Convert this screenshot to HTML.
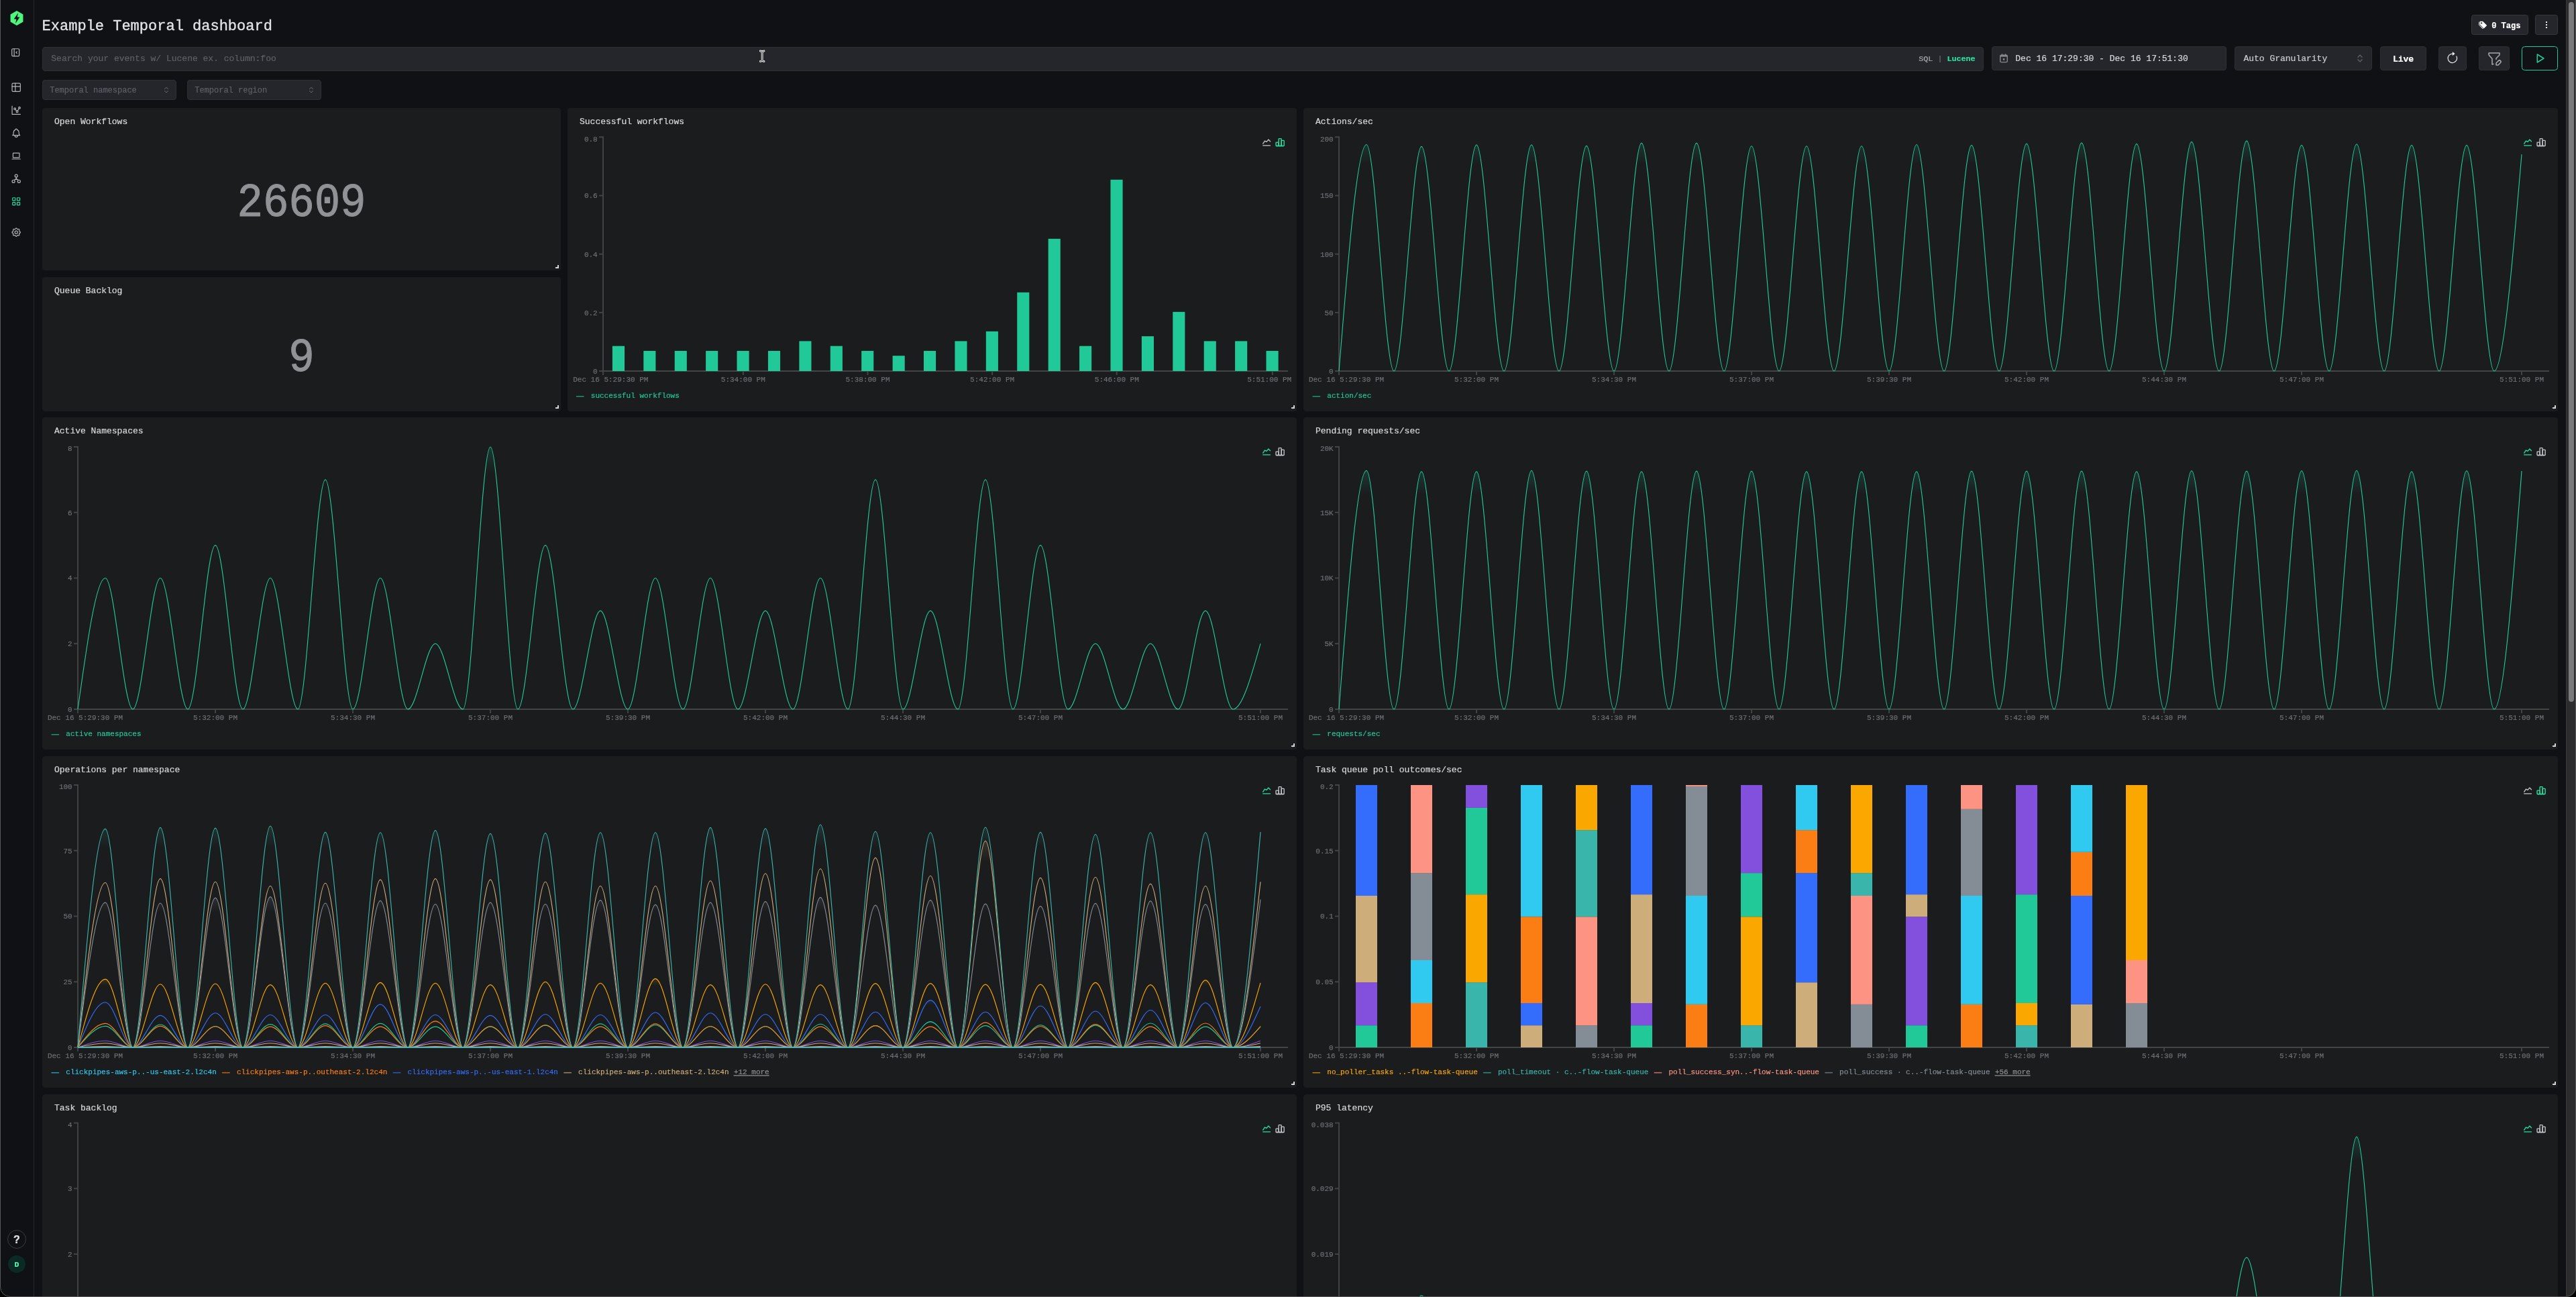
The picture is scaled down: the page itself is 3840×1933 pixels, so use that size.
<!DOCTYPE html><html lang="en"><head><meta charset="utf-8"><title>Example Temporal dashboard</title><style>

html,body{margin:0;padding:0;background:#000;}
body{width:3840px;height:1933px;overflow:hidden;font-family:"Liberation Mono", "DejaVu Sans Mono", monospace;}
#win{will-change:transform;position:absolute;left:0;top:0;width:3840px;height:1933px;background:#101114;overflow:hidden;border-radius:0 0 15px 15px;}
#frame{position:absolute;left:0;top:-2px;width:3840px;height:1935px;box-sizing:border-box;border:1px solid #58585a;border-radius:0 0 15px 15px;pointer-events:none;z-index:50;}
.t{position:absolute;white-space:pre;line-height:1;-webkit-text-stroke:0.22px currentColor;}
.ic{position:absolute;overflow:visible;}
.box{position:absolute;box-sizing:border-box;background:#25262b;border:1px solid #2e2f34;border-radius:4px;}
.panel{position:absolute;background:#1b1c1e;border-radius:4px;overflow:hidden;}
.panel svg.ch{position:absolute;left:0;top:0;}
.ch text{font-family:"Liberation Mono", "DejaVu Sans Mono", monospace;font-size:11px;fill:#6f7075;stroke:#6f7075;stroke-width:0.18px;}
.rz{position:absolute;width:5px;height:5px;margin-left:-1.2px;border-right:2px solid #d4d5d8;border-bottom:2px solid #d4d5d8;box-sizing:border-box;}

</style></head><body><div id="win">
<div id="sidebar" style="position:absolute;left:0;top:0;width:50px;height:1933px;border-right:1px solid #28292d;"></div>
<svg class="ic" style="left:13px;top:14px" width="24" height="26" viewBox="0 0 24 26"><path d="M12 2L21.45 7.5V18.5L12 24L2.55 18.5V7.5Z" fill="#4ff57c"/><path d="M14 5.3L7.7 14.5H11.4L10.1 20.9L16.400 11.500H12.700Z" fill="#101114"/></svg>
<svg class="ic" style="left:14.90px;top:69.80px" width="16.4" height="16.4" viewBox="0 0 24 24" fill="none" stroke="#b4b5b9" stroke-width="1.75" stroke-linecap="round" stroke-linejoin="round"><path d="M4 6a2 2 0 0 1 2 -2h12a2 2 0 0 1 2 2v12a2 2 0 0 1 -2 2h-12a2 2 0 0 1 -2 -2z"/><path d="M9 4v16"/><path d="M15 10l-2 2l2 2"/></svg>
<svg class="ic" style="left:15.80px;top:121.80px" width="16.4" height="16.4" viewBox="0 0 24 24" fill="none" stroke="#b4b5b9" stroke-width="1.75" stroke-linecap="round" stroke-linejoin="round"><path d="M3 5a2 2 0 0 1 2 -2h14a2 2 0 0 1 2 2v14a2 2 0 0 1 -2 2h-14a2 2 0 0 1 -2 -2v-14z"/><path d="M3 10h18"/><path d="M10 3v18"/></svg>
<svg class="ic" style="left:15.80px;top:156.10px" width="16.4" height="16.4" viewBox="0 0 24 24" fill="none" stroke="#b4b5b9" stroke-width="1.75" stroke-linecap="round" stroke-linejoin="round"><path d="M3 3v18h18"/><path d="M7 9a2 2 0 1 0 4 0a2 2 0 1 0 -4 0"/><path d="M17 7a2 2 0 1 0 4 0a2 2 0 1 0 -4 0"/><path d="M12 15a2 2 0 1 0 4 0a2 2 0 1 0 -4 0"/><path d="M10.16 10.62l2.34 2.88"/><path d="M15.088 13.328l2.837 -4.586"/></svg>
<svg class="ic" style="left:15.80px;top:189.80px" width="16.4" height="16.4" viewBox="0 0 24 24" fill="none" stroke="#b4b5b9" stroke-width="1.75" stroke-linecap="round" stroke-linejoin="round"><path d="M10 5a2 2 0 1 1 4 0a7 7 0 0 1 4 6v3a4 4 0 0 0 2 3h-16a4 4 0 0 0 2 -3v-3a7 7 0 0 1 4 -6"/><path d="M9 17v1a3 3 0 0 0 6 0v-1"/></svg>
<svg class="ic" style="left:15.80px;top:224.10px" width="16.4" height="16.4" viewBox="0 0 24 24" fill="none" stroke="#b4b5b9" stroke-width="1.75" stroke-linecap="round" stroke-linejoin="round"><path d="M3 19l18 0"/><path d="M5 7a1 1 0 0 1 1 -1h12a1 1 0 0 1 1 1v8a1 1 0 0 1 -1 1h-12a1 1 0 0 1 -1 -1z"/></svg>
<svg class="ic" style="left:15.80px;top:258.10px" width="16.4" height="16.4" viewBox="0 0 24 24" fill="none" stroke="#b4b5b9" stroke-width="1.75" stroke-linecap="round" stroke-linejoin="round"><path d="M9 6a3 3 0 1 0 6 0a3 3 0 1 0 -6 0"/><path d="M3 18a3 3 0 1 0 6 0a3 3 0 1 0 -6 0"/><path d="M15 18a3 3 0 1 0 6 0a3 3 0 1 0 -6 0"/><path d="M7.6 15.500l4.400 -3.500l4.400 3.500"/><path d="M12 9l0 3"/></svg>
<svg class="ic" style="left:15.80px;top:291.80px" width="16.4" height="16.4" viewBox="0 0 24 24" fill="none" stroke="#25dd9f" stroke-width="1.75" stroke-linecap="round" stroke-linejoin="round"><path d="M4 5a1 1 0 0 1 1 -1h4a1 1 0 0 1 1 1v4a1 1 0 0 1 -1 1h-4a1 1 0 0 1 -1 -1z"/><path d="M14 5a1 1 0 0 1 1 -1h4a1 1 0 0 1 1 1v4a1 1 0 0 1 -1 1h-4a1 1 0 0 1 -1 -1z"/><path d="M4 15a1 1 0 0 1 1 -1h4a1 1 0 0 1 1 1v4a1 1 0 0 1 -1 1h-4a1 1 0 0 1 -1 -1z"/><path d="M14 15a1 1 0 0 1 1 -1h4a1 1 0 0 1 1 1v4a1 1 0 0 1 -1 1h-4a1 1 0 0 1 -1 -1z"/></svg>
<svg class="ic" style="left:15.80px;top:338.30px" width="16.4" height="16.4" viewBox="0 0 24 24" fill="none" stroke="#b4b5b9" stroke-width="1.75" stroke-linecap="round" stroke-linejoin="round"><path d="M10.325 4.317c.426 -1.756 2.924 -1.756 3.35 0a1.724 1.724 0 0 0 2.573 1.066c1.543 -.94 3.31 .826 2.37 2.37a1.724 1.724 0 0 0 1.065 2.572c1.756 .426 1.756 2.924 0 3.35a1.724 1.724 0 0 0 -1.066 2.573c.94 1.543 -.826 3.31 -2.37 2.37a1.724 1.724 0 0 0 -2.572 1.065c-.426 1.756 -2.924 1.756 -3.35 0a1.724 1.724 0 0 0 -2.573 -1.066c-1.543 .94 -3.31 -.826 -2.37 -2.37a1.724 1.724 0 0 0 -1.065 -2.572c-1.756 -.426 -1.756 -2.924 0 -3.35a1.724 1.724 0 0 0 1.066 -2.573c-.94 -1.543 .826 -3.31 2.37 -2.37c1 .608 2.296 .07 2.572 -1.065z"/><path d="M9 12a3 3 0 1 0 6 0a3 3 0 0 0 -6 0"/></svg>
<div style="position:absolute;left:11px;top:1833px;width:28px;height:28px;box-sizing:border-box;border:1px solid #3a3b40;border-radius:50%"></div>
<div class="t " style="left:25.00px;top:1840.23px;font-size:16px;color:#e6e6e8;font-weight:700;transform:translateX(-50%);font-family:&quot;Liberation Sans&quot;,sans-serif;">?</div>
<div style="position:absolute;left:12px;top:1871px;width:26px;height:26px;border-radius:50%;background:#0b2a25"></div>
<div class="t " style="left:25.00px;top:1879.48px;font-size:11.5px;color:#59f5b0;font-weight:700;transform:translateX(-50%);">D</div>
<div class="t " style="left:62.60px;top:28.93px;font-size:22px;color:#e2e3e6;-webkit-text-stroke:0.35px #e2e3e6;">Example Temporal dashboard</div>
<div class="box" style="left:3684px;top:22px;width:85px;height:30px;border-color:#36373c;border-radius:3.5px"></div>
<svg class="ic" style="left:3694.6px;top:31.2px" width="12.2" height="12.2" viewBox="0 0 16 16" fill="#fff"><path d="M2 2a1 1 0 0 1 1-1h4.586a1 1 0 0 1 .707.293l7 7a1 1 0 0 1 0 1.414l-4.586 4.586a1 1 0 0 1-1.414 0l-7-7A1 1 0 0 1 2 6.586zm3.500 4a1.500 1.500 0 1 0 0-3 1.500 1.500 0 0 0 0 3"/><path d="M1.293 7.793A1 1 0 0 1 1 7.086V2a1 1 0 0 0-1 1v4.586a1 1 0 0 0 .293.707l7 7a1 1 0 0 0 1.414 0l.043-.043z"/></svg>
<div class="t " style="left:3714.20px;top:32.60px;font-size:12px;color:#ffffff;font-weight:700;">0 Tags</div>
<div class="box" style="left:3779px;top:22px;width:34px;height:30px;border-color:#36373c;border-radius:3.5px"></div>
<div style="position:absolute;left:3794.9px;top:32.1px;width:2.2px;height:2.2px;background:#fff;border-radius:0.6px"></div>
<div style="position:absolute;left:3794.9px;top:36.0px;width:2.2px;height:2.2px;background:#fff;border-radius:0.6px"></div>
<div style="position:absolute;left:3794.9px;top:39.9px;width:2.2px;height:2.2px;background:#fff;border-radius:0.6px"></div>
<div class="box" style="left:63px;top:70px;width:2894px;height:36px;"></div>
<div class="t " style="left:76.30px;top:81.03px;font-size:13px;color:#5c5f66;">Search your events w/ Lucene ex. column:foo</div>
<div class="t " style="left:2860.30px;top:82.63px;font-size:11.7px;color:#a6a7ab;">SQL</div>
<div class="t " style="left:2888.40px;top:82.63px;font-size:11.7px;color:#6a6b70;">|</div>
<div class="t " style="left:2902.40px;top:82.63px;font-size:11.7px;color:#25e2a1;font-weight:700;">Lucene</div>
<svg class="ic" style="left:1131.9px;top:74.8px" width="8.3" height="17.5" viewBox="0 0 10 21"><path d="M1.6 1.2C3.2 1.2 4.3 1.9 5 3.2C5.700 1.9 6.800 1.2 8.400 1.2M5 3.200V17.800M1.600 19.800C3.200 19.800 4.300 19.100 5 17.800C5.700 19.100 6.800 19.800 8.400 19.800" fill="none" stroke="#f4f4f4" stroke-width="3.400" stroke-linecap="round" stroke-linejoin="round"/><path d="M1.6 1.2C3.2 1.2 4.3 1.9 5 3.2C5.700 1.9 6.800 1.2 8.400 1.2M5 3.200V17.800M1.600 19.800C3.200 19.800 4.300 19.100 5 17.800C5.700 19.100 6.800 19.800 8.400 19.800" fill="none" stroke="#3a3a3a" stroke-width="1.200" stroke-linecap="round" stroke-linejoin="round"/></svg>
<div class="box" style="left:2969px;top:69px;width:350px;height:36px;"></div>
<svg class="ic" style="left:2980.8px;top:80.2px" width="12" height="13.4" viewBox="0 0 13 14.5"><rect x="0.8" y="2.3" width="11.4" height="11.4" rx="1.800" fill="none" stroke="#8a8b90" stroke-width="1.500"/><rect x="0.8" y="2.3" width="11.4" height="2.6" fill="#8a8b90"/><rect x="3" y="0.3" width="1.500" height="3" fill="#8a8b90"/><rect x="8.500" y="0.300" width="1.500" height="3" fill="#8a8b90"/><rect x="5.2" y="7.6" width="2.6" height="3" fill="#8a8b90"/></svg>
<div class="t " style="left:3004.30px;top:81.43px;font-size:13px;color:#d3d4d7;">Dec 16 17:29:30 - Dec 16 17:51:30</div>
<div class="box" style="left:3331px;top:69px;width:205px;height:36px;"></div>
<div class="t " style="left:3344.40px;top:81.43px;font-size:13px;color:#c9cacd;">Auto Granularity</div>
<svg class="ic" style="left:3511.8px;top:79.2px" width="12" height="16" viewBox="-6 -8 12 16" fill="none" stroke="#5c5f66" stroke-width="1.3" stroke-linecap="round" stroke-linejoin="round"><path d="M-3.1,-1.7 L0,-5.0 L3.1,-1.7"/><path d="M-3.1,1.7 L0,5.0 L3.1,1.7"/></svg>
<div class="box" style="left:3548px;top:69px;width:69px;height:36px;"></div>
<div class="t " style="left:3566.90px;top:81.53px;font-size:13px;color:#ffffff;font-weight:700;">Live</div>
<div class="box" style="left:3635px;top:69px;width:42px;height:36px;"></div>
<svg class="ic" style="left:3646.2px;top:77.0px" width="19.6" height="19.6" viewBox="0 0 16 16" fill="#ececee"><path fill-rule="evenodd" d="M8 3a5 5 0 1 0 4.546 2.914.5.5 0 0 1 .908-.417A6 6 0 1 1 8 2z"/><path d="M8 4.466V.534a.25.25 0 0 1 .41-.192l2.360 1.966c.120.100.120.284 0 .384L8.410 4.658A.250.250 0 0 1 8 4.466"/></svg>
<div class="box" style="left:3695px;top:69px;width:46px;height:36px;"></div>
<svg class="ic" style="left:3705.80px;top:75.00px" width="24" height="24" viewBox="0 0 24 24" fill="none" stroke="#a9aaae" stroke-width="1.5" stroke-linecap="round" stroke-linejoin="round"><path d="M10.97 20.344l-1.97 .656v-8.5l-4.48 -4.928a2 2 0 0 1 -.52 -1.345v-2.227h16v2.172a2 2 0 0 1 -.586 1.414l-4.414 4.414v1.5"/><path d="M18.42 15.61a2.1 2.1 0 0 1 2.97 2.97l-3.39 3.42h-3v-3l3.42 -3.39z"/></svg>
<div class="box" style="left:3759px;top:69px;width:54px;height:36px;background:transparent;border:1.5px solid #20c997;border-radius:4.5px"></div>
<svg class="ic" style="left:3777.00px;top:78.00px" width="18" height="18" viewBox="0 0 24 24" fill="none" stroke="#20c997" stroke-width="2.0" stroke-linecap="round" stroke-linejoin="round"><path d="M7 4v16l13 -8z"/></svg>
<div class="box" style="left:63px;top:119px;width:200px;height:30px;"></div>
<div class="t " style="left:74.20px;top:129.00px;font-size:12px;color:#5c5f66;">Temporal namespace</div>
<svg class="ic" style="left:242px;top:126.1px" width="12" height="16" viewBox="-6 -8 12 16" fill="none" stroke="#54575d" stroke-width="1.1" stroke-linecap="round" stroke-linejoin="round"><path d="M-2.5,-1.3 L0,-3.8 L2.5,-1.3"/><path d="M-2.5,1.3 L0,3.8 L2.5,1.3"/></svg>
<div class="box" style="left:279px;top:119px;width:200px;height:30px;"></div>
<div class="t " style="left:290.20px;top:129.00px;font-size:12px;color:#5c5f66;">Temporal region</div>
<svg class="ic" style="left:458px;top:126.1px" width="12" height="16" viewBox="-6 -8 12 16" fill="none" stroke="#54575d" stroke-width="1.1" stroke-linecap="round" stroke-linejoin="round"><path d="M-2.5,-1.3 L0,-3.8 L2.5,-1.3"/><path d="M-2.5,1.3 L0,3.8 L2.5,1.3"/></svg>
<div class="panel" style="left:63px;top:161px;width:773px;height:242px">
<div class="t " style="left:18.00px;top:13.63px;font-size:13px;color:#d5d6d9;">Open Workflows</div>
<div class="t " style="left:386.50px;top:111.52px;font-size:64px;color:#909296;transform:translateX(-50%);transform:translateX(-50%) scaleY(1.088);transform-origin:50% 76.69%;-webkit-text-stroke:1.0px #909296;">26609</div>
</div>
<div class="rz" style="left:829px;top:394.9px"></div>
<div class="panel" style="left:63px;top:413px;width:773px;height:200px">
<div class="t " style="left:18.00px;top:13.63px;font-size:13px;color:#d5d6d9;">Queue Backlog</div>
<div class="t " style="left:386.50px;top:90.72px;font-size:64px;color:#909296;transform:translateX(-50%);transform:translateX(-50%) scaleY(1.088);transform-origin:50% 76.69%;-webkit-text-stroke:1.0px #909296;">9</div>
</div>
<div class="rz" style="left:829px;top:604.4px"></div>
<div class="panel" style="left:846px;top:161px;width:1087px;height:452px">
<div class="t " style="left:18.00px;top:13.63px;font-size:13px;color:#d5d6d9;">Successful workflows</div>
<svg class="ic" style="left:1033.60px;top:42.70px" width="16.2" height="16.2" viewBox="0 0 24 24" fill="none" stroke="#c4c5c9" stroke-width="2.0" stroke-linecap="round" stroke-linejoin="round"><path d="M4 19l16 0"/><path d="M4 15l4 -6l4 2l4 -5l4 4"/></svg>
<svg class="ic" style="left:1053.60px;top:42.70px" width="16.2" height="16.2" viewBox="0 0 24 24" fill="none" stroke="#25e2a1" stroke-width="2.0" stroke-linecap="round" stroke-linejoin="round"><path d="M3 13a1 1 0 0 1 1 -1h4a1 1 0 0 1 1 1v6a1 1 0 0 1 -1 1h-4a1 1 0 0 1 -1 -1z"/><path d="M15 9a1 1 0 0 1 1 -1h4a1 1 0 0 1 1 1v10a1 1 0 0 1 -1 1h-4a1 1 0 0 1 -1 -1z"/><path d="M9 5a1 1 0 0 1 1 -1h4a1 1 0 0 1 1 1v14a1 1 0 0 1 -1 1h-4a1 1 0 0 1 -1 -1z"/><path d="M4 20h14"/></svg>
<svg class="ch" width="1087" height="452" viewBox="846 161 1087 452">
<g stroke="#444547" stroke-width="1.9" fill="none"><path d="M899,203.35000000000002V553"/><path d="M893,553H1920"/><path d="M893,465.825H899"/><path d="M893,378.65H899"/><path d="M893,291.475H899"/><path d="M893,204.3H899"/><path d="M899.0,553V559"/><path d="M1107.840909090909,553V559"/><path d="M1293.4772727272727,553V559"/><path d="M1479.1136363636365,553V559"/><path d="M1664.75,553V559"/><path d="M1896.7954545454545,553V559"/></g><text x="890.7" y="556.9" text-anchor="end">0</text><text x="890.7" y="469.7" text-anchor="end">0.2</text><text x="890.7" y="382.5" text-anchor="end">0.4</text><text x="890.7" y="295.4" text-anchor="end">0.6</text><text x="890.7" y="210.7" text-anchor="end">0.8</text><text x="910.3" y="569.3" text-anchor="middle">Dec 16 5:29:30 PM</text><text x="1107.8" y="569.3" text-anchor="middle">5:34:00 PM</text><text x="1293.5" y="569.3" text-anchor="middle">5:38:00 PM</text><text x="1479.1" y="569.3" text-anchor="middle">5:42:00 PM</text><text x="1664.8" y="569.3" text-anchor="middle">5:46:00 PM</text><text x="1892.2" y="569.3" text-anchor="middle">5:51:00 PM</text>
<g fill="#20c997"><rect x="912.90" y="515.68" width="18.1" height="37.32"/><rect x="959.31" y="522.94" width="18.1" height="30.06"/><rect x="1005.72" y="522.94" width="18.1" height="30.06"/><rect x="1052.13" y="522.94" width="18.1" height="30.06"/><rect x="1098.54" y="522.94" width="18.1" height="30.06"/><rect x="1144.95" y="522.94" width="18.1" height="30.06"/><rect x="1191.36" y="508.41" width="18.1" height="44.59"/><rect x="1237.77" y="515.68" width="18.1" height="37.32"/><rect x="1284.18" y="522.94" width="18.1" height="30.06"/><rect x="1330.59" y="530.21" width="18.1" height="22.79"/><rect x="1377.00" y="522.94" width="18.1" height="30.06"/><rect x="1423.40" y="508.41" width="18.1" height="44.59"/><rect x="1469.81" y="493.88" width="18.1" height="59.12"/><rect x="1516.22" y="435.77" width="18.1" height="117.23"/><rect x="1562.63" y="355.86" width="18.1" height="197.14"/><rect x="1609.04" y="515.68" width="18.1" height="37.32"/><rect x="1655.45" y="267.78" width="18.1" height="285.22"/><rect x="1701.86" y="501.15" width="18.1" height="51.85"/><rect x="1748.27" y="464.82" width="18.1" height="88.17"/><rect x="1794.68" y="508.41" width="18.1" height="44.59"/><rect x="1841.09" y="508.41" width="18.1" height="44.59"/><rect x="1887.50" y="522.94" width="18.1" height="30.06"/></g>
<path d="M859.0,590.7h11.6" stroke="#20c997" stroke-opacity="0.7" stroke-width="1.6"/><text x="880.8" y="593.4" style="fill:#20c997;stroke:#20c997">successful workflows</text>
</svg>
</div>
<div class="rz" style="left:1926px;top:604.4px"></div>
<div class="panel" style="left:1943px;top:161px;width:1870px;height:452px">
<div class="t " style="left:18.00px;top:13.63px;font-size:13px;color:#d5d6d9;">Actions/sec</div>
<svg class="ic" style="left:1816.60px;top:42.70px" width="16.2" height="16.2" viewBox="0 0 24 24" fill="none" stroke="#25e2a1" stroke-width="2.0" stroke-linecap="round" stroke-linejoin="round"><path d="M4 19l16 0"/><path d="M4 15l4 -6l4 2l4 -5l4 4"/></svg>
<svg class="ic" style="left:1836.60px;top:42.70px" width="16.2" height="16.2" viewBox="0 0 24 24" fill="none" stroke="#c4c5c9" stroke-width="2.0" stroke-linecap="round" stroke-linejoin="round"><path d="M3 13a1 1 0 0 1 1 -1h4a1 1 0 0 1 1 1v6a1 1 0 0 1 -1 1h-4a1 1 0 0 1 -1 -1z"/><path d="M15 9a1 1 0 0 1 1 -1h4a1 1 0 0 1 1 1v10a1 1 0 0 1 -1 1h-4a1 1 0 0 1 -1 -1z"/><path d="M9 5a1 1 0 0 1 1 -1h4a1 1 0 0 1 1 1v14a1 1 0 0 1 -1 1h-4a1 1 0 0 1 -1 -1z"/><path d="M4 20h14"/></svg>
<svg class="ch" width="1870" height="452" viewBox="1943 161 1870 452">
<g stroke="#444547" stroke-width="1.9" fill="none"><path d="M1996,203.35000000000002V553"/><path d="M1990,553H3800"/><path d="M1990,465.825H1996"/><path d="M1990,378.65H1996"/><path d="M1990,291.475H1996"/><path d="M1990,204.3H1996"/><path d="M1996,553V559"/><path d="M2201.0,553V559"/><path d="M2406,553V559"/><path d="M2611.0,553V559"/><path d="M2816,553V559"/><path d="M3021.0,553V559"/><path d="M3226,553V559"/><path d="M3431.0,553V559"/><path d="M3759.0,553V559"/></g><text x="1987.7" y="556.9" text-anchor="end">0</text><text x="1987.7" y="469.7" text-anchor="end">50</text><text x="1987.7" y="382.5" text-anchor="end">100</text><text x="1987.7" y="295.4" text-anchor="end">150</text><text x="1987.7" y="210.7" text-anchor="end">200</text><text x="2007.0" y="569.3" text-anchor="middle">Dec 16 5:29:30 PM</text><text x="2201.0" y="569.3" text-anchor="middle">5:32:00 PM</text><text x="2406.0" y="569.3" text-anchor="middle">5:34:30 PM</text><text x="2611.0" y="569.3" text-anchor="middle">5:37:00 PM</text><text x="2816.0" y="569.3" text-anchor="middle">5:39:30 PM</text><text x="3021.0" y="569.3" text-anchor="middle">5:42:00 PM</text><text x="3226.0" y="569.3" text-anchor="middle">5:44:30 PM</text><text x="3431.0" y="569.3" text-anchor="middle">5:47:00 PM</text><text x="3759.0" y="569.3" text-anchor="middle">5:51:00 PM</text>
<defs><linearGradient id="g1" x1="0" y1="0" x2="0" y2="1"><stop offset="0" stop-color="#20c997" stop-opacity="0.17"/><stop offset="0.1" stop-color="#20c997" stop-opacity="0"/></linearGradient></defs><path d="M1996.00,553.00C2009.67,384.23 2023.33,215.46 2037.00,215.46C2050.67,215.46 2064.33,553.00 2078.00,553.00C2091.67,553.00 2105.33,218.42 2119.00,218.42C2132.67,218.42 2146.33,553.00 2160.00,553.00C2173.67,553.00 2187.33,215.81 2201.00,215.81C2214.67,215.81 2228.33,553.00 2242.00,553.00C2255.67,553.00 2269.33,215.81 2283.00,215.81C2296.67,215.81 2310.33,553.00 2324.00,553.00C2337.67,553.00 2351.33,217.38 2365.00,217.38C2378.67,217.38 2392.33,553.00 2406.00,553.00C2419.67,553.00 2433.33,213.19 2447.00,213.19C2460.67,213.19 2474.33,553.00 2488.00,553.00C2501.67,553.00 2515.33,213.19 2529.00,213.19C2542.67,213.19 2556.33,553.00 2570.00,553.00C2583.67,553.00 2597.33,217.72 2611.00,217.72C2624.67,217.72 2638.33,553.00 2652.00,553.00C2665.67,553.00 2679.33,217.72 2693.00,217.72C2706.67,217.72 2720.33,553.00 2734.00,553.00C2747.67,553.00 2761.33,217.72 2775.00,217.72C2788.67,217.72 2802.33,553.00 2816.00,553.00C2829.67,553.00 2843.33,215.46 2857.00,215.46C2870.67,215.46 2884.33,553.00 2898.00,553.00C2911.67,553.00 2925.33,216.33 2939.00,216.33C2952.67,216.33 2966.33,553.00 2980.00,553.00C2993.67,553.00 3007.33,214.06 3021.00,214.06C3034.67,214.06 3048.33,553.00 3062.00,553.00C3075.67,553.00 3089.33,212.84 3103.00,212.84C3116.67,212.84 3130.33,553.00 3144.00,553.00C3157.67,553.00 3171.33,214.41 3185.00,214.41C3198.67,214.41 3212.33,553.00 3226.00,553.00C3239.67,553.00 3253.33,211.45 3267.00,211.45C3280.67,211.45 3294.33,553.00 3308.00,553.00C3321.67,553.00 3335.33,209.88 3349.00,209.88C3362.67,209.88 3376.33,553.00 3390.00,553.00C3403.67,553.00 3417.33,216.33 3431.00,216.33C3444.67,216.33 3458.33,553.00 3472.00,553.00C3485.67,553.00 3499.33,214.76 3513.00,214.76C3526.67,214.76 3540.33,553.00 3554.00,553.00C3567.67,553.00 3581.33,216.33 3595.00,216.33C3608.67,216.33 3622.33,553.00 3636.00,553.00C3649.67,553.00 3663.33,216.33 3677.00,216.33C3690.67,216.33 3704.33,553.00 3718.00,553.00C3731.67,553.00 3745.33,391.55 3759.00,230.10L3759.00,553L1996.00,553Z" fill="url(#g1)" stroke="none"/><path d="M1996.00,553.00C2009.67,384.23 2023.33,215.46 2037.00,215.46C2050.67,215.46 2064.33,553.00 2078.00,553.00C2091.67,553.00 2105.33,218.42 2119.00,218.42C2132.67,218.42 2146.33,553.00 2160.00,553.00C2173.67,553.00 2187.33,215.81 2201.00,215.81C2214.67,215.81 2228.33,553.00 2242.00,553.00C2255.67,553.00 2269.33,215.81 2283.00,215.81C2296.67,215.81 2310.33,553.00 2324.00,553.00C2337.67,553.00 2351.33,217.38 2365.00,217.38C2378.67,217.38 2392.33,553.00 2406.00,553.00C2419.67,553.00 2433.33,213.19 2447.00,213.19C2460.67,213.19 2474.33,553.00 2488.00,553.00C2501.67,553.00 2515.33,213.19 2529.00,213.19C2542.67,213.19 2556.33,553.00 2570.00,553.00C2583.67,553.00 2597.33,217.72 2611.00,217.72C2624.67,217.72 2638.33,553.00 2652.00,553.00C2665.67,553.00 2679.33,217.72 2693.00,217.72C2706.67,217.72 2720.33,553.00 2734.00,553.00C2747.67,553.00 2761.33,217.72 2775.00,217.72C2788.67,217.72 2802.33,553.00 2816.00,553.00C2829.67,553.00 2843.33,215.46 2857.00,215.46C2870.67,215.46 2884.33,553.00 2898.00,553.00C2911.67,553.00 2925.33,216.33 2939.00,216.33C2952.67,216.33 2966.33,553.00 2980.00,553.00C2993.67,553.00 3007.33,214.06 3021.00,214.06C3034.67,214.06 3048.33,553.00 3062.00,553.00C3075.67,553.00 3089.33,212.84 3103.00,212.84C3116.67,212.84 3130.33,553.00 3144.00,553.00C3157.67,553.00 3171.33,214.41 3185.00,214.41C3198.67,214.41 3212.33,553.00 3226.00,553.00C3239.67,553.00 3253.33,211.45 3267.00,211.45C3280.67,211.45 3294.33,553.00 3308.00,553.00C3321.67,553.00 3335.33,209.88 3349.00,209.88C3362.67,209.88 3376.33,553.00 3390.00,553.00C3403.67,553.00 3417.33,216.33 3431.00,216.33C3444.67,216.33 3458.33,553.00 3472.00,553.00C3485.67,553.00 3499.33,214.76 3513.00,214.76C3526.67,214.76 3540.33,553.00 3554.00,553.00C3567.67,553.00 3581.33,216.33 3595.00,216.33C3608.67,216.33 3622.33,553.00 3636.00,553.00C3649.67,553.00 3663.33,216.33 3677.00,216.33C3690.67,216.33 3704.33,553.00 3718.00,553.00C3731.67,553.00 3745.33,391.55 3759.00,230.10" fill="none" stroke="#20c997" stroke-width="1.15"/>
<path d="M1956.5,590.7h11.6" stroke="#20c997" stroke-opacity="0.7" stroke-width="1.6"/><text x="1978.3" y="593.4" style="fill:#20c997;stroke:#20c997">action/sec</text>
</svg>
</div>
<div class="rz" style="left:3806px;top:604.4px"></div>
<div class="panel" style="left:63px;top:622px;width:1870px;height:495px">
<div class="t " style="left:18.00px;top:14.13px;font-size:13px;color:#d5d6d9;">Active Namespaces</div>
<svg class="ic" style="left:1816.60px;top:43.20px" width="16.2" height="16.2" viewBox="0 0 24 24" fill="none" stroke="#25e2a1" stroke-width="2.0" stroke-linecap="round" stroke-linejoin="round"><path d="M4 19l16 0"/><path d="M4 15l4 -6l4 2l4 -5l4 4"/></svg>
<svg class="ic" style="left:1836.60px;top:43.20px" width="16.2" height="16.2" viewBox="0 0 24 24" fill="none" stroke="#c4c5c9" stroke-width="2.0" stroke-linecap="round" stroke-linejoin="round"><path d="M3 13a1 1 0 0 1 1 -1h4a1 1 0 0 1 1 1v6a1 1 0 0 1 -1 1h-4a1 1 0 0 1 -1 -1z"/><path d="M15 9a1 1 0 0 1 1 -1h4a1 1 0 0 1 1 1v10a1 1 0 0 1 -1 1h-4a1 1 0 0 1 -1 -1z"/><path d="M9 5a1 1 0 0 1 1 -1h4a1 1 0 0 1 1 1v14a1 1 0 0 1 -1 1h-4a1 1 0 0 1 -1 -1z"/><path d="M4 20h14"/></svg>
<svg class="ch" width="1870" height="495" viewBox="63 622 1870 495">
<g stroke="#444547" stroke-width="1.9" fill="none"><path d="M116,665.05V1057"/><path d="M110,1057H1920"/><path d="M110,959.25H116"/><path d="M110,861.5H116"/><path d="M110,763.75H116"/><path d="M110,666.0H116"/><path d="M116,1057V1063"/><path d="M321.0,1057V1063"/><path d="M526,1057V1063"/><path d="M731.0,1057V1063"/><path d="M936,1057V1063"/><path d="M1141.0,1057V1063"/><path d="M1346,1057V1063"/><path d="M1551.0,1057V1063"/><path d="M1879.0,1057V1063"/></g><text x="107.7" y="1060.9" text-anchor="end">0</text><text x="107.7" y="963.1" text-anchor="end">2</text><text x="107.7" y="865.4" text-anchor="end">4</text><text x="107.7" y="767.6" text-anchor="end">6</text><text x="107.7" y="672.4" text-anchor="end">8</text><text x="127.0" y="1073.3" text-anchor="middle">Dec 16 5:29:30 PM</text><text x="321.0" y="1073.3" text-anchor="middle">5:32:00 PM</text><text x="526.0" y="1073.3" text-anchor="middle">5:34:30 PM</text><text x="731.0" y="1073.3" text-anchor="middle">5:37:00 PM</text><text x="936.0" y="1073.3" text-anchor="middle">5:39:30 PM</text><text x="1141.0" y="1073.3" text-anchor="middle">5:42:00 PM</text><text x="1346.0" y="1073.3" text-anchor="middle">5:44:30 PM</text><text x="1551.0" y="1073.3" text-anchor="middle">5:47:00 PM</text><text x="1879.0" y="1073.3" text-anchor="middle">5:51:00 PM</text>
<defs><linearGradient id="g2" x1="0" y1="0" x2="0" y2="1"><stop offset="0" stop-color="#20c997" stop-opacity="0.17"/><stop offset="0.1" stop-color="#20c997" stop-opacity="0"/></linearGradient></defs><path d="M116.00,1057.00C129.67,959.25 143.33,861.50 157.00,861.50C170.67,861.50 184.33,1057.00 198.00,1057.00C211.67,1057.00 225.33,861.50 239.00,861.50C252.67,861.50 266.33,1057.00 280.00,1057.00C293.67,1057.00 307.33,812.62 321.00,812.62C334.67,812.62 348.33,1057.00 362.00,1057.00C375.67,1057.00 389.33,861.50 403.00,861.50C416.67,861.50 430.33,1057.00 444.00,1057.00C457.67,1057.00 471.33,714.88 485.00,714.88C498.67,714.88 512.33,1057.00 526.00,1057.00C539.67,1057.00 553.33,861.50 567.00,861.50C580.67,861.50 594.33,1057.00 608.00,1057.00C621.67,1057.00 635.33,959.25 649.00,959.25C662.67,959.25 676.33,1057.00 690.00,1057.00C703.67,1057.00 717.33,666.00 731.00,666.00C744.67,666.00 758.33,1057.00 772.00,1057.00C785.67,1057.00 799.33,812.62 813.00,812.62C826.67,812.62 840.33,1057.00 854.00,1057.00C867.67,1057.00 881.33,910.38 895.00,910.38C908.67,910.38 922.33,1057.00 936.00,1057.00C949.67,1057.00 963.33,861.50 977.00,861.50C990.67,861.50 1004.33,1057.00 1018.00,1057.00C1031.67,1057.00 1045.33,861.50 1059.00,861.50C1072.67,861.50 1086.33,1057.00 1100.00,1057.00C1113.67,1057.00 1127.33,910.38 1141.00,910.38C1154.67,910.38 1168.33,1057.00 1182.00,1057.00C1195.67,1057.00 1209.33,861.50 1223.00,861.50C1236.67,861.50 1250.33,1057.00 1264.00,1057.00C1277.67,1057.00 1291.33,714.88 1305.00,714.88C1318.67,714.88 1332.33,1057.00 1346.00,1057.00C1359.67,1057.00 1373.33,910.38 1387.00,910.38C1400.67,910.38 1414.33,1057.00 1428.00,1057.00C1441.67,1057.00 1455.33,714.88 1469.00,714.88C1482.67,714.88 1496.33,1057.00 1510.00,1057.00C1523.67,1057.00 1537.33,812.62 1551.00,812.62C1564.67,812.62 1578.33,1057.00 1592.00,1057.00C1605.67,1057.00 1619.33,959.25 1633.00,959.25C1646.67,959.25 1660.33,1057.00 1674.00,1057.00C1687.67,1057.00 1701.33,959.25 1715.00,959.25C1728.67,959.25 1742.33,1057.00 1756.00,1057.00C1769.67,1057.00 1783.33,910.38 1797.00,910.38C1810.67,910.38 1824.33,1057.00 1838.00,1057.00C1851.67,1057.00 1865.33,1008.12 1879.00,959.25L1879.00,1057L116.00,1057Z" fill="url(#g2)" stroke="none"/><path d="M116.00,1057.00C129.67,959.25 143.33,861.50 157.00,861.50C170.67,861.50 184.33,1057.00 198.00,1057.00C211.67,1057.00 225.33,861.50 239.00,861.50C252.67,861.50 266.33,1057.00 280.00,1057.00C293.67,1057.00 307.33,812.62 321.00,812.62C334.67,812.62 348.33,1057.00 362.00,1057.00C375.67,1057.00 389.33,861.50 403.00,861.50C416.67,861.50 430.33,1057.00 444.00,1057.00C457.67,1057.00 471.33,714.88 485.00,714.88C498.67,714.88 512.33,1057.00 526.00,1057.00C539.67,1057.00 553.33,861.50 567.00,861.50C580.67,861.50 594.33,1057.00 608.00,1057.00C621.67,1057.00 635.33,959.25 649.00,959.25C662.67,959.25 676.33,1057.00 690.00,1057.00C703.67,1057.00 717.33,666.00 731.00,666.00C744.67,666.00 758.33,1057.00 772.00,1057.00C785.67,1057.00 799.33,812.62 813.00,812.62C826.67,812.62 840.33,1057.00 854.00,1057.00C867.67,1057.00 881.33,910.38 895.00,910.38C908.67,910.38 922.33,1057.00 936.00,1057.00C949.67,1057.00 963.33,861.50 977.00,861.50C990.67,861.50 1004.33,1057.00 1018.00,1057.00C1031.67,1057.00 1045.33,861.50 1059.00,861.50C1072.67,861.50 1086.33,1057.00 1100.00,1057.00C1113.67,1057.00 1127.33,910.38 1141.00,910.38C1154.67,910.38 1168.33,1057.00 1182.00,1057.00C1195.67,1057.00 1209.33,861.50 1223.00,861.50C1236.67,861.50 1250.33,1057.00 1264.00,1057.00C1277.67,1057.00 1291.33,714.88 1305.00,714.88C1318.67,714.88 1332.33,1057.00 1346.00,1057.00C1359.67,1057.00 1373.33,910.38 1387.00,910.38C1400.67,910.38 1414.33,1057.00 1428.00,1057.00C1441.67,1057.00 1455.33,714.88 1469.00,714.88C1482.67,714.88 1496.33,1057.00 1510.00,1057.00C1523.67,1057.00 1537.33,812.62 1551.00,812.62C1564.67,812.62 1578.33,1057.00 1592.00,1057.00C1605.67,1057.00 1619.33,959.25 1633.00,959.25C1646.67,959.25 1660.33,1057.00 1674.00,1057.00C1687.67,1057.00 1701.33,959.25 1715.00,959.25C1728.67,959.25 1742.33,1057.00 1756.00,1057.00C1769.67,1057.00 1783.33,910.38 1797.00,910.38C1810.67,910.38 1824.33,1057.00 1838.00,1057.00C1851.67,1057.00 1865.33,1008.12 1879.00,959.25" fill="none" stroke="#20c997" stroke-width="1.15"/>
<path d="M76.5,1094.7h11.6" stroke="#20c997" stroke-opacity="0.7" stroke-width="1.6"/><text x="98.3" y="1097.4" style="fill:#20c997;stroke:#20c997">active namespaces</text>
</svg>
</div>
<div class="rz" style="left:1926px;top:1108.4px"></div>
<div class="panel" style="left:1943px;top:622px;width:1870px;height:495px">
<div class="t " style="left:18.00px;top:14.13px;font-size:13px;color:#d5d6d9;">Pending requests/sec</div>
<svg class="ic" style="left:1816.60px;top:43.20px" width="16.2" height="16.2" viewBox="0 0 24 24" fill="none" stroke="#25e2a1" stroke-width="2.0" stroke-linecap="round" stroke-linejoin="round"><path d="M4 19l16 0"/><path d="M4 15l4 -6l4 2l4 -5l4 4"/></svg>
<svg class="ic" style="left:1836.60px;top:43.20px" width="16.2" height="16.2" viewBox="0 0 24 24" fill="none" stroke="#c4c5c9" stroke-width="2.0" stroke-linecap="round" stroke-linejoin="round"><path d="M3 13a1 1 0 0 1 1 -1h4a1 1 0 0 1 1 1v6a1 1 0 0 1 -1 1h-4a1 1 0 0 1 -1 -1z"/><path d="M15 9a1 1 0 0 1 1 -1h4a1 1 0 0 1 1 1v10a1 1 0 0 1 -1 1h-4a1 1 0 0 1 -1 -1z"/><path d="M9 5a1 1 0 0 1 1 -1h4a1 1 0 0 1 1 1v14a1 1 0 0 1 -1 1h-4a1 1 0 0 1 -1 -1z"/><path d="M4 20h14"/></svg>
<svg class="ch" width="1870" height="495" viewBox="1943 622 1870 495">
<g stroke="#444547" stroke-width="1.9" fill="none"><path d="M1996,665.05V1057"/><path d="M1990,1057H3800"/><path d="M1990,959.25H1996"/><path d="M1990,861.5H1996"/><path d="M1990,763.75H1996"/><path d="M1990,666.0H1996"/><path d="M1996,1057V1063"/><path d="M2201.0,1057V1063"/><path d="M2406,1057V1063"/><path d="M2611.0,1057V1063"/><path d="M2816,1057V1063"/><path d="M3021.0,1057V1063"/><path d="M3226,1057V1063"/><path d="M3431.0,1057V1063"/><path d="M3759.0,1057V1063"/></g><text x="1987.7" y="1060.9" text-anchor="end">0</text><text x="1987.7" y="963.1" text-anchor="end">5K</text><text x="1987.7" y="865.4" text-anchor="end">10K</text><text x="1987.7" y="767.6" text-anchor="end">15K</text><text x="1987.7" y="672.4" text-anchor="end">20K</text><text x="2007.0" y="1073.3" text-anchor="middle">Dec 16 5:29:30 PM</text><text x="2201.0" y="1073.3" text-anchor="middle">5:32:00 PM</text><text x="2406.0" y="1073.3" text-anchor="middle">5:34:30 PM</text><text x="2611.0" y="1073.3" text-anchor="middle">5:37:00 PM</text><text x="2816.0" y="1073.3" text-anchor="middle">5:39:30 PM</text><text x="3021.0" y="1073.3" text-anchor="middle">5:42:00 PM</text><text x="3226.0" y="1073.3" text-anchor="middle">5:44:30 PM</text><text x="3431.0" y="1073.3" text-anchor="middle">5:47:00 PM</text><text x="3759.0" y="1073.3" text-anchor="middle">5:51:00 PM</text>
<defs><linearGradient id="g3" x1="0" y1="0" x2="0" y2="1"><stop offset="0" stop-color="#20c997" stop-opacity="0.17"/><stop offset="0.1" stop-color="#20c997" stop-opacity="0"/></linearGradient></defs><path d="M1996.00,1057.00C2009.67,879.15 2023.33,701.31 2037.00,701.31C2050.67,701.31 2064.33,1057.00 2078.00,1057.00C2091.67,1057.00 2105.33,702.80 2119.00,702.80C2132.67,702.80 2146.33,1057.00 2160.00,1057.00C2173.67,1057.00 2187.33,702.80 2201.00,702.80C2214.67,702.80 2228.33,1057.00 2242.00,1057.00C2255.67,1057.00 2269.33,701.31 2283.00,701.31C2296.67,701.31 2310.33,1057.00 2324.00,1057.00C2337.67,1057.00 2351.33,702.05 2365.00,702.05C2378.67,702.05 2392.33,1057.00 2406.00,1057.00C2419.67,1057.00 2433.33,702.80 2447.00,702.80C2460.67,702.80 2474.33,1057.00 2488.00,1057.00C2501.67,1057.00 2515.33,702.05 2529.00,702.05C2542.67,702.05 2556.33,1057.00 2570.00,1057.00C2583.67,1057.00 2597.33,702.05 2611.00,702.05C2624.67,702.05 2638.33,1057.00 2652.00,1057.00C2665.67,1057.00 2679.33,702.80 2693.00,702.80C2706.67,702.80 2720.33,1057.00 2734.00,1057.00C2747.67,1057.00 2761.33,702.80 2775.00,702.80C2788.67,702.80 2802.33,1057.00 2816.00,1057.00C2829.67,1057.00 2843.33,702.80 2857.00,702.80C2870.67,702.80 2884.33,1057.00 2898.00,1057.00C2911.67,1057.00 2925.33,702.05 2939.00,702.05C2952.67,702.05 2966.33,1057.00 2980.00,1057.00C2993.67,1057.00 3007.33,702.05 3021.00,702.05C3034.67,702.05 3048.33,1057.00 3062.00,1057.00C3075.67,1057.00 3089.33,702.05 3103.00,702.05C3116.67,702.05 3130.33,1057.00 3144.00,1057.00C3157.67,1057.00 3171.33,702.80 3185.00,702.80C3198.67,702.80 3212.33,1057.00 3226.00,1057.00C3239.67,1057.00 3253.33,701.68 3267.00,701.68C3280.67,701.68 3294.33,1057.00 3308.00,1057.00C3321.67,1057.00 3335.33,702.05 3349.00,702.05C3362.67,702.05 3376.33,1057.00 3390.00,1057.00C3403.67,1057.00 3417.33,701.68 3431.00,701.68C3444.67,701.68 3458.33,1057.00 3472.00,1057.00C3485.67,1057.00 3499.33,701.31 3513.00,701.31C3526.67,701.31 3540.33,1057.00 3554.00,1057.00C3567.67,1057.00 3581.33,702.80 3595.00,702.80C3608.67,702.80 3622.33,1057.00 3636.00,1057.00C3649.67,1057.00 3663.33,701.68 3677.00,701.68C3690.67,701.68 3704.33,1057.00 3718.00,1057.00C3731.67,1057.00 3745.33,879.53 3759.00,702.05L3759.00,1057L1996.00,1057Z" fill="url(#g3)" stroke="none"/><path d="M1996.00,1057.00C2009.67,879.15 2023.33,701.31 2037.00,701.31C2050.67,701.31 2064.33,1057.00 2078.00,1057.00C2091.67,1057.00 2105.33,702.80 2119.00,702.80C2132.67,702.80 2146.33,1057.00 2160.00,1057.00C2173.67,1057.00 2187.33,702.80 2201.00,702.80C2214.67,702.80 2228.33,1057.00 2242.00,1057.00C2255.67,1057.00 2269.33,701.31 2283.00,701.31C2296.67,701.31 2310.33,1057.00 2324.00,1057.00C2337.67,1057.00 2351.33,702.05 2365.00,702.05C2378.67,702.05 2392.33,1057.00 2406.00,1057.00C2419.67,1057.00 2433.33,702.80 2447.00,702.80C2460.67,702.80 2474.33,1057.00 2488.00,1057.00C2501.67,1057.00 2515.33,702.05 2529.00,702.05C2542.67,702.05 2556.33,1057.00 2570.00,1057.00C2583.67,1057.00 2597.33,702.05 2611.00,702.05C2624.67,702.05 2638.33,1057.00 2652.00,1057.00C2665.67,1057.00 2679.33,702.80 2693.00,702.80C2706.67,702.80 2720.33,1057.00 2734.00,1057.00C2747.67,1057.00 2761.33,702.80 2775.00,702.80C2788.67,702.80 2802.33,1057.00 2816.00,1057.00C2829.67,1057.00 2843.33,702.80 2857.00,702.80C2870.67,702.80 2884.33,1057.00 2898.00,1057.00C2911.67,1057.00 2925.33,702.05 2939.00,702.05C2952.67,702.05 2966.33,1057.00 2980.00,1057.00C2993.67,1057.00 3007.33,702.05 3021.00,702.05C3034.67,702.05 3048.33,1057.00 3062.00,1057.00C3075.67,1057.00 3089.33,702.05 3103.00,702.05C3116.67,702.05 3130.33,1057.00 3144.00,1057.00C3157.67,1057.00 3171.33,702.80 3185.00,702.80C3198.67,702.80 3212.33,1057.00 3226.00,1057.00C3239.67,1057.00 3253.33,701.68 3267.00,701.68C3280.67,701.68 3294.33,1057.00 3308.00,1057.00C3321.67,1057.00 3335.33,702.05 3349.00,702.05C3362.67,702.05 3376.33,1057.00 3390.00,1057.00C3403.67,1057.00 3417.33,701.68 3431.00,701.68C3444.67,701.68 3458.33,1057.00 3472.00,1057.00C3485.67,1057.00 3499.33,701.31 3513.00,701.31C3526.67,701.31 3540.33,1057.00 3554.00,1057.00C3567.67,1057.00 3581.33,702.80 3595.00,702.80C3608.67,702.80 3622.33,1057.00 3636.00,1057.00C3649.67,1057.00 3663.33,701.68 3677.00,701.68C3690.67,701.68 3704.33,1057.00 3718.00,1057.00C3731.67,1057.00 3745.33,879.53 3759.00,702.05" fill="none" stroke="#20c997" stroke-width="1.15"/>
<path d="M1956.5,1094.7h11.6" stroke="#20c997" stroke-opacity="0.7" stroke-width="1.6"/><text x="1978.3" y="1097.4" style="fill:#20c997;stroke:#20c997">requests/sec</text>
</svg>
</div>
<div class="rz" style="left:3806px;top:1108.4px"></div>
<div class="panel" style="left:63px;top:1127px;width:1870px;height:494px">
<div class="t " style="left:18.00px;top:13.63px;font-size:13px;color:#d5d6d9;">Operations per namespace</div>
<svg class="ic" style="left:1816.60px;top:42.70px" width="16.2" height="16.2" viewBox="0 0 24 24" fill="none" stroke="#25e2a1" stroke-width="2.0" stroke-linecap="round" stroke-linejoin="round"><path d="M4 19l16 0"/><path d="M4 15l4 -6l4 2l4 -5l4 4"/></svg>
<svg class="ic" style="left:1836.60px;top:42.70px" width="16.2" height="16.2" viewBox="0 0 24 24" fill="none" stroke="#c4c5c9" stroke-width="2.0" stroke-linecap="round" stroke-linejoin="round"><path d="M3 13a1 1 0 0 1 1 -1h4a1 1 0 0 1 1 1v6a1 1 0 0 1 -1 1h-4a1 1 0 0 1 -1 -1z"/><path d="M15 9a1 1 0 0 1 1 -1h4a1 1 0 0 1 1 1v10a1 1 0 0 1 -1 1h-4a1 1 0 0 1 -1 -1z"/><path d="M9 5a1 1 0 0 1 1 -1h4a1 1 0 0 1 1 1v14a1 1 0 0 1 -1 1h-4a1 1 0 0 1 -1 -1z"/><path d="M4 20h14"/></svg>
<svg class="ch" width="1870" height="494" viewBox="63 1127 1870 494">
<g stroke="#444547" stroke-width="1.9" fill="none"><path d="M116,1169.05V1561"/><path d="M110,1561H1920"/><path d="M110,1463.25H116"/><path d="M110,1365.5H116"/><path d="M110,1267.75H116"/><path d="M110,1170.0H116"/><path d="M116,1561V1567"/><path d="M321.0,1561V1567"/><path d="M526,1561V1567"/><path d="M731.0,1561V1567"/><path d="M936,1561V1567"/><path d="M1141.0,1561V1567"/><path d="M1346,1561V1567"/><path d="M1551.0,1561V1567"/><path d="M1879.0,1561V1567"/></g><text x="107.7" y="1564.9" text-anchor="end">0</text><text x="107.7" y="1467.2" text-anchor="end">25</text><text x="107.7" y="1369.4" text-anchor="end">50</text><text x="107.7" y="1271.7" text-anchor="end">75</text><text x="107.7" y="1176.4" text-anchor="end">100</text><text x="127.0" y="1577.3" text-anchor="middle">Dec 16 5:29:30 PM</text><text x="321.0" y="1577.3" text-anchor="middle">5:32:00 PM</text><text x="526.0" y="1577.3" text-anchor="middle">5:34:30 PM</text><text x="731.0" y="1577.3" text-anchor="middle">5:37:00 PM</text><text x="936.0" y="1577.3" text-anchor="middle">5:39:30 PM</text><text x="1141.0" y="1577.3" text-anchor="middle">5:42:00 PM</text><text x="1346.0" y="1577.3" text-anchor="middle">5:44:30 PM</text><text x="1551.0" y="1577.3" text-anchor="middle">5:47:00 PM</text><text x="1879.0" y="1577.3" text-anchor="middle">5:51:00 PM</text>
<defs><linearGradient id="g4" x1="0" y1="0" x2="0" y2="1"><stop offset="0" stop-color="#20c997" stop-opacity="0.17"/><stop offset="0.1" stop-color="#20c997" stop-opacity="0"/></linearGradient></defs><path d="M116.00,1561.00C129.67,1545.16 143.33,1529.33 157.00,1529.33C170.67,1529.33 184.33,1561.00 198.00,1561.00C211.67,1561.00 225.33,1526.98 239.00,1526.98C252.67,1526.98 266.33,1561.00 280.00,1561.00C293.67,1561.00 307.33,1529.72 321.00,1529.72C334.67,1529.72 348.33,1561.00 362.00,1561.00C375.67,1561.00 389.33,1526.59 403.00,1526.59C416.67,1526.59 430.33,1561.00 444.00,1561.00C457.67,1561.00 471.33,1525.81 485.00,1525.81C498.67,1525.81 512.33,1561.00 526.00,1561.00C539.67,1561.00 553.33,1525.42 567.00,1525.42C580.67,1525.42 594.33,1561.00 608.00,1561.00C621.67,1561.00 635.33,1530.11 649.00,1530.11C662.67,1530.11 676.33,1561.00 690.00,1561.00C703.67,1561.00 717.33,1530.11 731.00,1530.11C744.67,1530.11 758.33,1561.00 772.00,1561.00C785.67,1561.00 799.33,1528.16 813.00,1528.16C826.67,1528.16 840.33,1561.00 854.00,1561.00C867.67,1561.00 881.33,1525.81 895.00,1525.81C908.67,1525.81 922.33,1561.00 936.00,1561.00C949.67,1561.00 963.33,1527.77 977.00,1527.77C990.67,1527.77 1004.33,1561.00 1018.00,1561.00C1031.67,1561.00 1045.33,1529.72 1059.00,1529.72C1072.67,1529.72 1086.33,1561.00 1100.00,1561.00C1113.67,1561.00 1127.33,1529.72 1141.00,1529.72C1154.67,1529.72 1168.33,1561.00 1182.00,1561.00C1195.67,1561.00 1209.33,1526.20 1223.00,1526.20C1236.67,1526.20 1250.33,1561.00 1264.00,1561.00C1277.67,1561.00 1291.33,1528.55 1305.00,1528.55C1318.67,1528.55 1332.33,1561.00 1346.00,1561.00C1359.67,1561.00 1373.33,1522.68 1387.00,1522.68C1400.67,1522.68 1414.33,1561.00 1428.00,1561.00C1441.67,1561.00 1455.33,1528.55 1469.00,1528.55C1482.67,1528.55 1496.33,1561.00 1510.00,1561.00C1523.67,1561.00 1537.33,1527.77 1551.00,1527.77C1564.67,1527.77 1578.33,1561.00 1592.00,1561.00C1605.67,1561.00 1619.33,1528.16 1633.00,1528.16C1646.67,1528.16 1660.33,1561.00 1674.00,1561.00C1687.67,1561.00 1701.33,1525.03 1715.00,1525.03C1728.67,1525.03 1742.33,1561.00 1756.00,1561.00C1769.67,1561.00 1783.33,1530.11 1797.00,1530.11C1810.67,1530.11 1824.33,1561.00 1838.00,1561.00C1851.67,1561.00 1865.33,1545.36 1879.00,1529.72L1879.00,1561L116.00,1561Z" fill="url(#g4)" stroke="none"/><path d="M116.00,1561.00C129.67,1545.16 143.33,1529.33 157.00,1529.33C170.67,1529.33 184.33,1561.00 198.00,1561.00C211.67,1561.00 225.33,1526.98 239.00,1526.98C252.67,1526.98 266.33,1561.00 280.00,1561.00C293.67,1561.00 307.33,1529.72 321.00,1529.72C334.67,1529.72 348.33,1561.00 362.00,1561.00C375.67,1561.00 389.33,1526.59 403.00,1526.59C416.67,1526.59 430.33,1561.00 444.00,1561.00C457.67,1561.00 471.33,1525.81 485.00,1525.81C498.67,1525.81 512.33,1561.00 526.00,1561.00C539.67,1561.00 553.33,1525.42 567.00,1525.42C580.67,1525.42 594.33,1561.00 608.00,1561.00C621.67,1561.00 635.33,1530.11 649.00,1530.11C662.67,1530.11 676.33,1561.00 690.00,1561.00C703.67,1561.00 717.33,1530.11 731.00,1530.11C744.67,1530.11 758.33,1561.00 772.00,1561.00C785.67,1561.00 799.33,1528.16 813.00,1528.16C826.67,1528.16 840.33,1561.00 854.00,1561.00C867.67,1561.00 881.33,1525.81 895.00,1525.81C908.67,1525.81 922.33,1561.00 936.00,1561.00C949.67,1561.00 963.33,1527.77 977.00,1527.77C990.67,1527.77 1004.33,1561.00 1018.00,1561.00C1031.67,1561.00 1045.33,1529.72 1059.00,1529.72C1072.67,1529.72 1086.33,1561.00 1100.00,1561.00C1113.67,1561.00 1127.33,1529.72 1141.00,1529.72C1154.67,1529.72 1168.33,1561.00 1182.00,1561.00C1195.67,1561.00 1209.33,1526.20 1223.00,1526.20C1236.67,1526.20 1250.33,1561.00 1264.00,1561.00C1277.67,1561.00 1291.33,1528.55 1305.00,1528.55C1318.67,1528.55 1332.33,1561.00 1346.00,1561.00C1359.67,1561.00 1373.33,1522.68 1387.00,1522.68C1400.67,1522.68 1414.33,1561.00 1428.00,1561.00C1441.67,1561.00 1455.33,1528.55 1469.00,1528.55C1482.67,1528.55 1496.33,1561.00 1510.00,1561.00C1523.67,1561.00 1537.33,1527.77 1551.00,1527.77C1564.67,1527.77 1578.33,1561.00 1592.00,1561.00C1605.67,1561.00 1619.33,1528.16 1633.00,1528.16C1646.67,1528.16 1660.33,1561.00 1674.00,1561.00C1687.67,1561.00 1701.33,1525.03 1715.00,1525.03C1728.67,1525.03 1742.33,1561.00 1756.00,1561.00C1769.67,1561.00 1783.33,1530.11 1797.00,1530.11C1810.67,1530.11 1824.33,1561.00 1838.00,1561.00C1851.67,1561.00 1865.33,1545.36 1879.00,1529.72" fill="none" stroke="#20c997" stroke-width="1.15"/>
<path d="M116.00,1561.00C129.67,1556.11 143.33,1551.22 157.00,1551.22C170.67,1551.22 184.33,1561.00 198.00,1561.00C211.67,1561.00 225.33,1551.22 239.00,1551.22C252.67,1551.22 266.33,1561.00 280.00,1561.00C293.67,1561.00 307.33,1551.22 321.00,1551.22C334.67,1551.22 348.33,1561.00 362.00,1561.00C375.67,1561.00 389.33,1551.22 403.00,1551.22C416.67,1551.22 430.33,1561.00 444.00,1561.00C457.67,1561.00 471.33,1551.22 485.00,1551.22C498.67,1551.22 512.33,1561.00 526.00,1561.00C539.67,1561.00 553.33,1551.22 567.00,1551.22C580.67,1551.22 594.33,1561.00 608.00,1561.00C621.67,1561.00 635.33,1551.22 649.00,1551.22C662.67,1551.22 676.33,1561.00 690.00,1561.00C703.67,1561.00 717.33,1551.22 731.00,1551.22C744.67,1551.22 758.33,1561.00 772.00,1561.00C785.67,1561.00 799.33,1551.22 813.00,1551.22C826.67,1551.22 840.33,1561.00 854.00,1561.00C867.67,1561.00 881.33,1551.22 895.00,1551.22C908.67,1551.22 922.33,1561.00 936.00,1561.00C949.67,1561.00 963.33,1551.22 977.00,1551.22C990.67,1551.22 1004.33,1561.00 1018.00,1561.00C1031.67,1561.00 1045.33,1551.22 1059.00,1551.22C1072.67,1551.22 1086.33,1561.00 1100.00,1561.00C1113.67,1561.00 1127.33,1551.22 1141.00,1551.22C1154.67,1551.22 1168.33,1561.00 1182.00,1561.00C1195.67,1561.00 1209.33,1551.22 1223.00,1551.22C1236.67,1551.22 1250.33,1561.00 1264.00,1561.00C1277.67,1561.00 1291.33,1551.22 1305.00,1551.22C1318.67,1551.22 1332.33,1561.00 1346.00,1561.00C1359.67,1561.00 1373.33,1551.22 1387.00,1551.22C1400.67,1551.22 1414.33,1561.00 1428.00,1561.00C1441.67,1561.00 1455.33,1551.22 1469.00,1551.22C1482.67,1551.22 1496.33,1561.00 1510.00,1561.00C1523.67,1561.00 1537.33,1551.22 1551.00,1551.22C1564.67,1551.22 1578.33,1561.00 1592.00,1561.00C1605.67,1561.00 1619.33,1551.22 1633.00,1551.22C1646.67,1551.22 1660.33,1561.00 1674.00,1561.00C1687.67,1561.00 1701.33,1551.22 1715.00,1551.22C1728.67,1551.22 1742.33,1561.00 1756.00,1561.00C1769.67,1561.00 1783.33,1551.22 1797.00,1551.22C1810.67,1551.22 1824.33,1561.00 1838.00,1561.00C1851.67,1561.00 1865.33,1556.11 1879.00,1551.22" fill="none" stroke="#8250dc" stroke-width="1.15"/>
<path d="M116.00,1561.00C129.67,1557.87 143.33,1554.74 157.00,1554.74C170.67,1554.74 184.33,1561.00 198.00,1561.00C211.67,1561.00 225.33,1554.74 239.00,1554.74C252.67,1554.74 266.33,1561.00 280.00,1561.00C293.67,1561.00 307.33,1554.74 321.00,1554.74C334.67,1554.74 348.33,1561.00 362.00,1561.00C375.67,1561.00 389.33,1554.74 403.00,1554.74C416.67,1554.74 430.33,1561.00 444.00,1561.00C457.67,1561.00 471.33,1554.74 485.00,1554.74C498.67,1554.74 512.33,1561.00 526.00,1561.00C539.67,1561.00 553.33,1554.74 567.00,1554.74C580.67,1554.74 594.33,1561.00 608.00,1561.00C621.67,1561.00 635.33,1554.74 649.00,1554.74C662.67,1554.74 676.33,1561.00 690.00,1561.00C703.67,1561.00 717.33,1554.74 731.00,1554.74C744.67,1554.74 758.33,1561.00 772.00,1561.00C785.67,1561.00 799.33,1554.74 813.00,1554.74C826.67,1554.74 840.33,1561.00 854.00,1561.00C867.67,1561.00 881.33,1554.74 895.00,1554.74C908.67,1554.74 922.33,1561.00 936.00,1561.00C949.67,1561.00 963.33,1554.74 977.00,1554.74C990.67,1554.74 1004.33,1561.00 1018.00,1561.00C1031.67,1561.00 1045.33,1554.74 1059.00,1554.74C1072.67,1554.74 1086.33,1561.00 1100.00,1561.00C1113.67,1561.00 1127.33,1554.74 1141.00,1554.74C1154.67,1554.74 1168.33,1561.00 1182.00,1561.00C1195.67,1561.00 1209.33,1554.74 1223.00,1554.74C1236.67,1554.74 1250.33,1561.00 1264.00,1561.00C1277.67,1561.00 1291.33,1554.74 1305.00,1554.74C1318.67,1554.74 1332.33,1561.00 1346.00,1561.00C1359.67,1561.00 1373.33,1554.74 1387.00,1554.74C1400.67,1554.74 1414.33,1561.00 1428.00,1561.00C1441.67,1561.00 1455.33,1554.74 1469.00,1554.74C1482.67,1554.74 1496.33,1561.00 1510.00,1561.00C1523.67,1561.00 1537.33,1554.74 1551.00,1554.74C1564.67,1554.74 1578.33,1561.00 1592.00,1561.00C1605.67,1561.00 1619.33,1554.74 1633.00,1554.74C1646.67,1554.74 1660.33,1561.00 1674.00,1561.00C1687.67,1561.00 1701.33,1554.74 1715.00,1554.74C1728.67,1554.74 1742.33,1561.00 1756.00,1561.00C1769.67,1561.00 1783.33,1554.74 1797.00,1554.74C1810.67,1554.74 1824.33,1561.00 1838.00,1561.00C1851.67,1561.00 1865.33,1557.87 1879.00,1554.74" fill="none" stroke="#cdad7a" stroke-width="1.15"/>
<defs><linearGradient id="g5" x1="0" y1="0" x2="0" y2="1"><stop offset="0" stop-color="#346dfb" stop-opacity="0.17"/><stop offset="0.1" stop-color="#346dfb" stop-opacity="0"/></linearGradient></defs><path d="M116.00,1561.00C129.67,1527.37 143.33,1493.75 157.00,1493.75C170.67,1493.75 184.33,1561.00 198.00,1561.00C211.67,1561.00 225.33,1513.30 239.00,1513.30C252.67,1513.30 266.33,1561.00 280.00,1561.00C293.67,1561.00 307.33,1509.78 321.00,1509.78C334.67,1509.78 348.33,1561.00 362.00,1561.00C375.67,1561.00 389.33,1512.52 403.00,1512.52C416.67,1512.52 430.33,1561.00 444.00,1561.00C457.67,1561.00 471.33,1512.52 485.00,1512.52C498.67,1512.52 512.33,1561.00 526.00,1561.00C539.67,1561.00 553.33,1496.88 567.00,1496.88C580.67,1496.88 594.33,1561.00 608.00,1561.00C621.67,1561.00 635.33,1512.52 649.00,1512.52C662.67,1512.52 676.33,1561.00 690.00,1561.00C703.67,1561.00 717.33,1513.30 731.00,1513.30C744.67,1513.30 758.33,1561.00 772.00,1561.00C785.67,1561.00 799.33,1511.73 813.00,1511.73C826.67,1511.73 840.33,1561.00 854.00,1561.00C867.67,1561.00 881.33,1512.52 895.00,1512.52C908.67,1512.52 922.33,1561.00 936.00,1561.00C949.67,1561.00 963.33,1509.00 977.00,1509.00C990.67,1509.00 1004.33,1561.00 1018.00,1561.00C1031.67,1561.00 1045.33,1509.78 1059.00,1509.78C1072.67,1509.78 1086.33,1561.00 1100.00,1561.00C1113.67,1561.00 1127.33,1511.73 1141.00,1511.73C1154.67,1511.73 1168.33,1561.00 1182.00,1561.00C1195.67,1561.00 1209.33,1511.73 1223.00,1511.73C1236.67,1511.73 1250.33,1561.00 1264.00,1561.00C1277.67,1561.00 1291.33,1508.21 1305.00,1508.21C1318.67,1508.21 1332.33,1561.00 1346.00,1561.00C1359.67,1561.00 1373.33,1490.62 1387.00,1490.62C1400.67,1490.62 1414.33,1561.00 1428.00,1561.00C1441.67,1561.00 1455.33,1508.21 1469.00,1508.21C1482.67,1508.21 1496.33,1561.00 1510.00,1561.00C1523.67,1561.00 1537.33,1499.22 1551.00,1499.22C1564.67,1499.22 1578.33,1561.00 1592.00,1561.00C1605.67,1561.00 1619.33,1507.04 1633.00,1507.04C1646.67,1507.04 1660.33,1561.00 1674.00,1561.00C1687.67,1561.00 1701.33,1505.48 1715.00,1505.48C1728.67,1505.48 1742.33,1561.00 1756.00,1561.00C1769.67,1561.00 1783.33,1494.53 1797.00,1494.53C1810.67,1494.53 1824.33,1561.00 1838.00,1561.00C1851.67,1561.00 1865.33,1530.50 1879.00,1500.00L1879.00,1561L116.00,1561Z" fill="url(#g5)" stroke="none"/><path d="M116.00,1561.00C129.67,1527.37 143.33,1493.75 157.00,1493.75C170.67,1493.75 184.33,1561.00 198.00,1561.00C211.67,1561.00 225.33,1513.30 239.00,1513.30C252.67,1513.30 266.33,1561.00 280.00,1561.00C293.67,1561.00 307.33,1509.78 321.00,1509.78C334.67,1509.78 348.33,1561.00 362.00,1561.00C375.67,1561.00 389.33,1512.52 403.00,1512.52C416.67,1512.52 430.33,1561.00 444.00,1561.00C457.67,1561.00 471.33,1512.52 485.00,1512.52C498.67,1512.52 512.33,1561.00 526.00,1561.00C539.67,1561.00 553.33,1496.88 567.00,1496.88C580.67,1496.88 594.33,1561.00 608.00,1561.00C621.67,1561.00 635.33,1512.52 649.00,1512.52C662.67,1512.52 676.33,1561.00 690.00,1561.00C703.67,1561.00 717.33,1513.30 731.00,1513.30C744.67,1513.30 758.33,1561.00 772.00,1561.00C785.67,1561.00 799.33,1511.73 813.00,1511.73C826.67,1511.73 840.33,1561.00 854.00,1561.00C867.67,1561.00 881.33,1512.52 895.00,1512.52C908.67,1512.52 922.33,1561.00 936.00,1561.00C949.67,1561.00 963.33,1509.00 977.00,1509.00C990.67,1509.00 1004.33,1561.00 1018.00,1561.00C1031.67,1561.00 1045.33,1509.78 1059.00,1509.78C1072.67,1509.78 1086.33,1561.00 1100.00,1561.00C1113.67,1561.00 1127.33,1511.73 1141.00,1511.73C1154.67,1511.73 1168.33,1561.00 1182.00,1561.00C1195.67,1561.00 1209.33,1511.73 1223.00,1511.73C1236.67,1511.73 1250.33,1561.00 1264.00,1561.00C1277.67,1561.00 1291.33,1508.21 1305.00,1508.21C1318.67,1508.21 1332.33,1561.00 1346.00,1561.00C1359.67,1561.00 1373.33,1490.62 1387.00,1490.62C1400.67,1490.62 1414.33,1561.00 1428.00,1561.00C1441.67,1561.00 1455.33,1508.21 1469.00,1508.21C1482.67,1508.21 1496.33,1561.00 1510.00,1561.00C1523.67,1561.00 1537.33,1499.22 1551.00,1499.22C1564.67,1499.22 1578.33,1561.00 1592.00,1561.00C1605.67,1561.00 1619.33,1507.04 1633.00,1507.04C1646.67,1507.04 1660.33,1561.00 1674.00,1561.00C1687.67,1561.00 1701.33,1505.48 1715.00,1505.48C1728.67,1505.48 1742.33,1561.00 1756.00,1561.00C1769.67,1561.00 1783.33,1494.53 1797.00,1494.53C1810.67,1494.53 1824.33,1561.00 1838.00,1561.00C1851.67,1561.00 1865.33,1530.50 1879.00,1500.00" fill="none" stroke="#346dfb" stroke-width="1.15"/>
<defs><linearGradient id="g6" x1="0" y1="0" x2="0" y2="1"><stop offset="0" stop-color="#fb7e14" stop-opacity="0.17"/><stop offset="0.1" stop-color="#fb7e14" stop-opacity="0"/></linearGradient></defs><path d="M116.00,1561.00C129.67,1543.21 143.33,1525.42 157.00,1525.42C170.67,1525.42 184.33,1561.00 198.00,1561.00C211.67,1561.00 225.33,1529.33 239.00,1529.33C252.67,1529.33 266.33,1561.00 280.00,1561.00C293.67,1561.00 307.33,1529.72 321.00,1529.72C334.67,1529.72 348.33,1561.00 362.00,1561.00C375.67,1561.00 389.33,1530.11 403.00,1530.11C416.67,1530.11 430.33,1561.00 444.00,1561.00C457.67,1561.00 471.33,1528.55 485.00,1528.55C498.67,1528.55 512.33,1561.00 526.00,1561.00C539.67,1561.00 553.33,1530.11 567.00,1530.11C580.67,1530.11 594.33,1561.00 608.00,1561.00C621.67,1561.00 635.33,1521.90 649.00,1521.90C662.67,1521.90 676.33,1561.00 690.00,1561.00C703.67,1561.00 717.33,1529.72 731.00,1529.72C744.67,1529.72 758.33,1561.00 772.00,1561.00C785.67,1561.00 799.33,1527.77 813.00,1527.77C826.67,1527.77 840.33,1561.00 854.00,1561.00C867.67,1561.00 881.33,1530.11 895.00,1530.11C908.67,1530.11 922.33,1561.00 936.00,1561.00C949.67,1561.00 963.33,1525.81 977.00,1525.81C990.67,1525.81 1004.33,1561.00 1018.00,1561.00C1031.67,1561.00 1045.33,1529.72 1059.00,1529.72C1072.67,1529.72 1086.33,1561.00 1100.00,1561.00C1113.67,1561.00 1127.33,1529.72 1141.00,1529.72C1154.67,1529.72 1168.33,1561.00 1182.00,1561.00C1195.67,1561.00 1209.33,1530.11 1223.00,1530.11C1236.67,1530.11 1250.33,1561.00 1264.00,1561.00C1277.67,1561.00 1291.33,1528.55 1305.00,1528.55C1318.67,1528.55 1332.33,1561.00 1346.00,1561.00C1359.67,1561.00 1373.33,1530.11 1387.00,1530.11C1400.67,1530.11 1414.33,1561.00 1428.00,1561.00C1441.67,1561.00 1455.33,1523.86 1469.00,1523.86C1482.67,1523.86 1496.33,1561.00 1510.00,1561.00C1523.67,1561.00 1537.33,1529.72 1551.00,1529.72C1564.67,1529.72 1578.33,1561.00 1592.00,1561.00C1605.67,1561.00 1619.33,1526.59 1633.00,1526.59C1646.67,1526.59 1660.33,1561.00 1674.00,1561.00C1687.67,1561.00 1701.33,1530.11 1715.00,1530.11C1728.67,1530.11 1742.33,1561.00 1756.00,1561.00C1769.67,1561.00 1783.33,1525.03 1797.00,1525.03C1810.67,1525.03 1824.33,1561.00 1838.00,1561.00C1851.67,1561.00 1865.33,1545.36 1879.00,1529.72L1879.00,1561L116.00,1561Z" fill="url(#g6)" stroke="none"/><path d="M116.00,1561.00C129.67,1543.21 143.33,1525.42 157.00,1525.42C170.67,1525.42 184.33,1561.00 198.00,1561.00C211.67,1561.00 225.33,1529.33 239.00,1529.33C252.67,1529.33 266.33,1561.00 280.00,1561.00C293.67,1561.00 307.33,1529.72 321.00,1529.72C334.67,1529.72 348.33,1561.00 362.00,1561.00C375.67,1561.00 389.33,1530.11 403.00,1530.11C416.67,1530.11 430.33,1561.00 444.00,1561.00C457.67,1561.00 471.33,1528.55 485.00,1528.55C498.67,1528.55 512.33,1561.00 526.00,1561.00C539.67,1561.00 553.33,1530.11 567.00,1530.11C580.67,1530.11 594.33,1561.00 608.00,1561.00C621.67,1561.00 635.33,1521.90 649.00,1521.90C662.67,1521.90 676.33,1561.00 690.00,1561.00C703.67,1561.00 717.33,1529.72 731.00,1529.72C744.67,1529.72 758.33,1561.00 772.00,1561.00C785.67,1561.00 799.33,1527.77 813.00,1527.77C826.67,1527.77 840.33,1561.00 854.00,1561.00C867.67,1561.00 881.33,1530.11 895.00,1530.11C908.67,1530.11 922.33,1561.00 936.00,1561.00C949.67,1561.00 963.33,1525.81 977.00,1525.81C990.67,1525.81 1004.33,1561.00 1018.00,1561.00C1031.67,1561.00 1045.33,1529.72 1059.00,1529.72C1072.67,1529.72 1086.33,1561.00 1100.00,1561.00C1113.67,1561.00 1127.33,1529.72 1141.00,1529.72C1154.67,1529.72 1168.33,1561.00 1182.00,1561.00C1195.67,1561.00 1209.33,1530.11 1223.00,1530.11C1236.67,1530.11 1250.33,1561.00 1264.00,1561.00C1277.67,1561.00 1291.33,1528.55 1305.00,1528.55C1318.67,1528.55 1332.33,1561.00 1346.00,1561.00C1359.67,1561.00 1373.33,1530.11 1387.00,1530.11C1400.67,1530.11 1414.33,1561.00 1428.00,1561.00C1441.67,1561.00 1455.33,1523.86 1469.00,1523.86C1482.67,1523.86 1496.33,1561.00 1510.00,1561.00C1523.67,1561.00 1537.33,1529.72 1551.00,1529.72C1564.67,1529.72 1578.33,1561.00 1592.00,1561.00C1605.67,1561.00 1619.33,1526.59 1633.00,1526.59C1646.67,1526.59 1660.33,1561.00 1674.00,1561.00C1687.67,1561.00 1701.33,1530.11 1715.00,1530.11C1728.67,1530.11 1742.33,1561.00 1756.00,1561.00C1769.67,1561.00 1783.33,1525.03 1797.00,1525.03C1810.67,1525.03 1824.33,1561.00 1838.00,1561.00C1851.67,1561.00 1865.33,1545.36 1879.00,1529.72" fill="none" stroke="#fb7e14" stroke-width="1.15"/>
<path d="M116.00,1561.00C129.67,1560.32 143.33,1559.63 157.00,1559.63C170.67,1559.63 184.33,1561.00 198.00,1561.00C211.67,1561.00 225.33,1559.63 239.00,1559.63C252.67,1559.63 266.33,1561.00 280.00,1561.00C293.67,1561.00 307.33,1559.63 321.00,1559.63C334.67,1559.63 348.33,1561.00 362.00,1561.00C375.67,1561.00 389.33,1559.63 403.00,1559.63C416.67,1559.63 430.33,1561.00 444.00,1561.00C457.67,1561.00 471.33,1559.63 485.00,1559.63C498.67,1559.63 512.33,1561.00 526.00,1561.00C539.67,1561.00 553.33,1559.63 567.00,1559.63C580.67,1559.63 594.33,1561.00 608.00,1561.00C621.67,1561.00 635.33,1559.63 649.00,1559.63C662.67,1559.63 676.33,1561.00 690.00,1561.00C703.67,1561.00 717.33,1559.63 731.00,1559.63C744.67,1559.63 758.33,1561.00 772.00,1561.00C785.67,1561.00 799.33,1559.63 813.00,1559.63C826.67,1559.63 840.33,1561.00 854.00,1561.00C867.67,1561.00 881.33,1559.63 895.00,1559.63C908.67,1559.63 922.33,1561.00 936.00,1561.00C949.67,1561.00 963.33,1559.63 977.00,1559.63C990.67,1559.63 1004.33,1561.00 1018.00,1561.00C1031.67,1561.00 1045.33,1559.63 1059.00,1559.63C1072.67,1559.63 1086.33,1561.00 1100.00,1561.00C1113.67,1561.00 1127.33,1559.63 1141.00,1559.63C1154.67,1559.63 1168.33,1561.00 1182.00,1561.00C1195.67,1561.00 1209.33,1559.63 1223.00,1559.63C1236.67,1559.63 1250.33,1561.00 1264.00,1561.00C1277.67,1561.00 1291.33,1559.63 1305.00,1559.63C1318.67,1559.63 1332.33,1561.00 1346.00,1561.00C1359.67,1561.00 1373.33,1559.63 1387.00,1559.63C1400.67,1559.63 1414.33,1561.00 1428.00,1561.00C1441.67,1561.00 1455.33,1559.63 1469.00,1559.63C1482.67,1559.63 1496.33,1561.00 1510.00,1561.00C1523.67,1561.00 1537.33,1559.63 1551.00,1559.63C1564.67,1559.63 1578.33,1561.00 1592.00,1561.00C1605.67,1561.00 1619.33,1559.63 1633.00,1559.63C1646.67,1559.63 1660.33,1561.00 1674.00,1561.00C1687.67,1561.00 1701.33,1559.63 1715.00,1559.63C1728.67,1559.63 1742.33,1561.00 1756.00,1561.00C1769.67,1561.00 1783.33,1559.63 1797.00,1559.63C1810.67,1559.63 1824.33,1561.00 1838.00,1561.00C1851.67,1561.00 1865.33,1560.32 1879.00,1559.63" fill="none" stroke="#fd9382" stroke-width="1.15"/>
<defs><linearGradient id="g7" x1="0" y1="0" x2="0" y2="1"><stop offset="0" stop-color="#faa700" stop-opacity="0.17"/><stop offset="0.1" stop-color="#faa700" stop-opacity="0"/></linearGradient></defs><path d="M116.00,1561.00C129.67,1510.17 143.33,1459.34 157.00,1459.34C170.67,1459.34 184.33,1561.00 198.00,1561.00C211.67,1561.00 225.33,1466.77 239.00,1466.77C252.67,1466.77 266.33,1561.00 280.00,1561.00C293.67,1561.00 307.33,1465.99 321.00,1465.99C334.67,1465.99 348.33,1561.00 362.00,1561.00C375.67,1561.00 389.33,1467.55 403.00,1467.55C416.67,1467.55 430.33,1561.00 444.00,1561.00C457.67,1561.00 471.33,1465.20 485.00,1465.20C498.67,1465.20 512.33,1561.00 526.00,1561.00C539.67,1561.00 553.33,1464.42 567.00,1464.42C580.67,1464.42 594.33,1561.00 608.00,1561.00C621.67,1561.00 635.33,1465.20 649.00,1465.20C662.67,1465.20 676.33,1561.00 690.00,1561.00C703.67,1561.00 717.33,1467.55 731.00,1467.55C744.67,1467.55 758.33,1561.00 772.00,1561.00C785.67,1561.00 799.33,1463.25 813.00,1463.25C826.67,1463.25 840.33,1561.00 854.00,1561.00C867.67,1561.00 881.33,1465.20 895.00,1465.20C908.67,1465.20 922.33,1561.00 936.00,1561.00C949.67,1561.00 963.33,1458.56 977.00,1458.56C990.67,1458.56 1004.33,1561.00 1018.00,1561.00C1031.67,1561.00 1045.33,1467.55 1059.00,1467.55C1072.67,1467.55 1086.33,1561.00 1100.00,1561.00C1113.67,1561.00 1127.33,1466.77 1141.00,1466.77C1154.67,1466.77 1168.33,1561.00 1182.00,1561.00C1195.67,1561.00 1209.33,1467.55 1223.00,1467.55C1236.67,1467.55 1250.33,1561.00 1264.00,1561.00C1277.67,1561.00 1291.33,1465.60 1305.00,1465.60C1318.67,1465.60 1332.33,1561.00 1346.00,1561.00C1359.67,1561.00 1373.33,1465.60 1387.00,1465.60C1400.67,1465.60 1414.33,1561.00 1428.00,1561.00C1441.67,1561.00 1455.33,1467.16 1469.00,1467.16C1482.67,1467.16 1496.33,1561.00 1510.00,1561.00C1523.67,1561.00 1537.33,1467.16 1551.00,1467.16C1564.67,1467.16 1578.33,1561.00 1592.00,1561.00C1605.67,1561.00 1619.33,1464.42 1633.00,1464.42C1646.67,1464.42 1660.33,1561.00 1674.00,1561.00C1687.67,1561.00 1701.33,1467.55 1715.00,1467.55C1728.67,1467.55 1742.33,1561.00 1756.00,1561.00C1769.67,1561.00 1783.33,1460.90 1797.00,1460.90C1810.67,1460.90 1824.33,1561.00 1838.00,1561.00C1851.67,1561.00 1865.33,1512.91 1879.00,1464.81L1879.00,1561L116.00,1561Z" fill="url(#g7)" stroke="none"/><path d="M116.00,1561.00C129.67,1510.17 143.33,1459.34 157.00,1459.34C170.67,1459.34 184.33,1561.00 198.00,1561.00C211.67,1561.00 225.33,1466.77 239.00,1466.77C252.67,1466.77 266.33,1561.00 280.00,1561.00C293.67,1561.00 307.33,1465.99 321.00,1465.99C334.67,1465.99 348.33,1561.00 362.00,1561.00C375.67,1561.00 389.33,1467.55 403.00,1467.55C416.67,1467.55 430.33,1561.00 444.00,1561.00C457.67,1561.00 471.33,1465.20 485.00,1465.20C498.67,1465.20 512.33,1561.00 526.00,1561.00C539.67,1561.00 553.33,1464.42 567.00,1464.42C580.67,1464.42 594.33,1561.00 608.00,1561.00C621.67,1561.00 635.33,1465.20 649.00,1465.20C662.67,1465.20 676.33,1561.00 690.00,1561.00C703.67,1561.00 717.33,1467.55 731.00,1467.55C744.67,1467.55 758.33,1561.00 772.00,1561.00C785.67,1561.00 799.33,1463.25 813.00,1463.25C826.67,1463.25 840.33,1561.00 854.00,1561.00C867.67,1561.00 881.33,1465.20 895.00,1465.20C908.67,1465.20 922.33,1561.00 936.00,1561.00C949.67,1561.00 963.33,1458.56 977.00,1458.56C990.67,1458.56 1004.33,1561.00 1018.00,1561.00C1031.67,1561.00 1045.33,1467.55 1059.00,1467.55C1072.67,1467.55 1086.33,1561.00 1100.00,1561.00C1113.67,1561.00 1127.33,1466.77 1141.00,1466.77C1154.67,1466.77 1168.33,1561.00 1182.00,1561.00C1195.67,1561.00 1209.33,1467.55 1223.00,1467.55C1236.67,1467.55 1250.33,1561.00 1264.00,1561.00C1277.67,1561.00 1291.33,1465.60 1305.00,1465.60C1318.67,1465.60 1332.33,1561.00 1346.00,1561.00C1359.67,1561.00 1373.33,1465.60 1387.00,1465.60C1400.67,1465.60 1414.33,1561.00 1428.00,1561.00C1441.67,1561.00 1455.33,1467.16 1469.00,1467.16C1482.67,1467.16 1496.33,1561.00 1510.00,1561.00C1523.67,1561.00 1537.33,1467.16 1551.00,1467.16C1564.67,1467.16 1578.33,1561.00 1592.00,1561.00C1605.67,1561.00 1619.33,1464.42 1633.00,1464.42C1646.67,1464.42 1660.33,1561.00 1674.00,1561.00C1687.67,1561.00 1701.33,1467.55 1715.00,1467.55C1728.67,1467.55 1742.33,1561.00 1756.00,1561.00C1769.67,1561.00 1783.33,1460.90 1797.00,1460.90C1810.67,1460.90 1824.33,1561.00 1838.00,1561.00C1851.67,1561.00 1865.33,1512.91 1879.00,1464.81" fill="none" stroke="#faa700" stroke-width="1.15"/>
<defs><linearGradient id="g8" x1="0" y1="0" x2="0" y2="1"><stop offset="0" stop-color="#cdad7a" stop-opacity="0.17"/><stop offset="0.1" stop-color="#cdad7a" stop-opacity="0"/></linearGradient></defs><path d="M116.00,1561.00C129.67,1438.23 143.33,1315.45 157.00,1315.45C170.67,1315.45 184.33,1561.00 198.00,1561.00C211.67,1561.00 225.33,1309.59 239.00,1309.59C252.67,1309.59 266.33,1561.00 280.00,1561.00C293.67,1561.00 307.33,1314.28 321.00,1314.28C334.67,1314.28 348.33,1561.00 362.00,1561.00C375.67,1561.00 389.33,1320.54 403.00,1320.54C416.67,1320.54 430.33,1561.00 444.00,1561.00C457.67,1561.00 471.33,1316.23 485.00,1316.23C498.67,1316.23 512.33,1561.00 526.00,1561.00C539.67,1561.00 553.33,1311.15 567.00,1311.15C580.67,1311.15 594.33,1561.00 608.00,1561.00C621.67,1561.00 635.33,1309.59 649.00,1309.59C662.67,1309.59 676.33,1561.00 690.00,1561.00C703.67,1561.00 717.33,1311.15 731.00,1311.15C744.67,1311.15 758.33,1561.00 772.00,1561.00C785.67,1561.00 799.33,1314.28 813.00,1314.28C826.67,1314.28 840.33,1561.00 854.00,1561.00C867.67,1561.00 881.33,1320.54 895.00,1320.54C908.67,1320.54 922.33,1561.00 936.00,1561.00C949.67,1561.00 963.33,1320.54 977.00,1320.54C990.67,1320.54 1004.33,1561.00 1018.00,1561.00C1031.67,1561.00 1045.33,1312.71 1059.00,1312.71C1072.67,1312.71 1086.33,1561.00 1100.00,1561.00C1113.67,1561.00 1127.33,1301.77 1141.00,1301.77C1154.67,1301.77 1168.33,1561.00 1182.00,1561.00C1195.67,1561.00 1209.33,1294.73 1223.00,1294.73C1236.67,1294.73 1250.33,1561.00 1264.00,1561.00C1277.67,1561.00 1291.33,1278.31 1305.00,1278.31C1318.67,1278.31 1332.33,1561.00 1346.00,1561.00C1359.67,1561.00 1373.33,1305.29 1387.00,1305.29C1400.67,1305.29 1414.33,1561.00 1428.00,1561.00C1441.67,1561.00 1455.33,1253.28 1469.00,1253.28C1482.67,1253.28 1496.33,1561.00 1510.00,1561.00C1523.67,1561.00 1537.33,1308.41 1551.00,1308.41C1564.67,1308.41 1578.33,1561.00 1592.00,1561.00C1605.67,1561.00 1619.33,1307.24 1633.00,1307.24C1646.67,1307.24 1660.33,1561.00 1674.00,1561.00C1687.67,1561.00 1701.33,1317.41 1715.00,1317.41C1728.67,1317.41 1742.33,1561.00 1756.00,1561.00C1769.67,1561.00 1783.33,1320.54 1797.00,1320.54C1810.67,1320.54 1824.33,1561.00 1838.00,1561.00C1851.67,1561.00 1865.33,1437.64 1879.00,1314.28L1879.00,1561L116.00,1561Z" fill="url(#g8)" stroke="none"/><path d="M116.00,1561.00C129.67,1438.23 143.33,1315.45 157.00,1315.45C170.67,1315.45 184.33,1561.00 198.00,1561.00C211.67,1561.00 225.33,1309.59 239.00,1309.59C252.67,1309.59 266.33,1561.00 280.00,1561.00C293.67,1561.00 307.33,1314.28 321.00,1314.28C334.67,1314.28 348.33,1561.00 362.00,1561.00C375.67,1561.00 389.33,1320.54 403.00,1320.54C416.67,1320.54 430.33,1561.00 444.00,1561.00C457.67,1561.00 471.33,1316.23 485.00,1316.23C498.67,1316.23 512.33,1561.00 526.00,1561.00C539.67,1561.00 553.33,1311.15 567.00,1311.15C580.67,1311.15 594.33,1561.00 608.00,1561.00C621.67,1561.00 635.33,1309.59 649.00,1309.59C662.67,1309.59 676.33,1561.00 690.00,1561.00C703.67,1561.00 717.33,1311.15 731.00,1311.15C744.67,1311.15 758.33,1561.00 772.00,1561.00C785.67,1561.00 799.33,1314.28 813.00,1314.28C826.67,1314.28 840.33,1561.00 854.00,1561.00C867.67,1561.00 881.33,1320.54 895.00,1320.54C908.67,1320.54 922.33,1561.00 936.00,1561.00C949.67,1561.00 963.33,1320.54 977.00,1320.54C990.67,1320.54 1004.33,1561.00 1018.00,1561.00C1031.67,1561.00 1045.33,1312.71 1059.00,1312.71C1072.67,1312.71 1086.33,1561.00 1100.00,1561.00C1113.67,1561.00 1127.33,1301.77 1141.00,1301.77C1154.67,1301.77 1168.33,1561.00 1182.00,1561.00C1195.67,1561.00 1209.33,1294.73 1223.00,1294.73C1236.67,1294.73 1250.33,1561.00 1264.00,1561.00C1277.67,1561.00 1291.33,1278.31 1305.00,1278.31C1318.67,1278.31 1332.33,1561.00 1346.00,1561.00C1359.67,1561.00 1373.33,1305.29 1387.00,1305.29C1400.67,1305.29 1414.33,1561.00 1428.00,1561.00C1441.67,1561.00 1455.33,1253.28 1469.00,1253.28C1482.67,1253.28 1496.33,1561.00 1510.00,1561.00C1523.67,1561.00 1537.33,1308.41 1551.00,1308.41C1564.67,1308.41 1578.33,1561.00 1592.00,1561.00C1605.67,1561.00 1619.33,1307.24 1633.00,1307.24C1646.67,1307.24 1660.33,1561.00 1674.00,1561.00C1687.67,1561.00 1701.33,1317.41 1715.00,1317.41C1728.67,1317.41 1742.33,1561.00 1756.00,1561.00C1769.67,1561.00 1783.33,1320.54 1797.00,1320.54C1810.67,1320.54 1824.33,1561.00 1838.00,1561.00C1851.67,1561.00 1865.33,1437.64 1879.00,1314.28" fill="none" stroke="#cdad7a" stroke-width="1.15"/>
<defs><linearGradient id="g9" x1="0" y1="0" x2="0" y2="1"><stop offset="0" stop-color="#848d96" stop-opacity="0.17"/><stop offset="0.1" stop-color="#848d96" stop-opacity="0"/></linearGradient></defs><path d="M116.00,1561.00C129.67,1453.08 143.33,1345.17 157.00,1345.17C170.67,1345.17 184.33,1561.00 198.00,1561.00C211.67,1561.00 225.33,1345.95 239.00,1345.95C252.67,1345.95 266.33,1561.00 280.00,1561.00C293.67,1561.00 307.33,1338.13 321.00,1338.13C334.67,1338.13 348.33,1561.00 362.00,1561.00C375.67,1561.00 389.33,1336.57 403.00,1336.57C416.67,1336.57 430.33,1561.00 444.00,1561.00C457.67,1561.00 471.33,1345.95 485.00,1345.95C498.67,1345.95 512.33,1561.00 526.00,1561.00C539.67,1561.00 553.33,1342.43 567.00,1342.43C580.67,1342.43 594.33,1561.00 608.00,1561.00C621.67,1561.00 635.33,1347.51 649.00,1347.51C662.67,1347.51 676.33,1561.00 690.00,1561.00C703.67,1561.00 717.33,1345.17 731.00,1345.17C744.67,1345.17 758.33,1561.00 772.00,1561.00C785.67,1561.00 799.33,1347.51 813.00,1347.51C826.67,1347.51 840.33,1561.00 854.00,1561.00C867.67,1561.00 881.33,1341.65 895.00,1341.65C908.67,1341.65 922.33,1561.00 936.00,1561.00C949.67,1561.00 963.33,1348.30 977.00,1348.30C990.67,1348.30 1004.33,1561.00 1018.00,1561.00C1031.67,1561.00 1045.33,1345.17 1059.00,1345.17C1072.67,1345.17 1086.33,1561.00 1100.00,1561.00C1113.67,1561.00 1127.33,1343.60 1141.00,1343.60C1154.67,1343.60 1168.33,1561.00 1182.00,1561.00C1195.67,1561.00 1209.33,1337.35 1223.00,1337.35C1236.67,1337.35 1250.33,1561.00 1264.00,1561.00C1277.67,1561.00 1291.33,1349.08 1305.00,1349.08C1318.67,1349.08 1332.33,1561.00 1346.00,1561.00C1359.67,1561.00 1373.33,1341.65 1387.00,1341.65C1400.67,1341.65 1414.33,1561.00 1428.00,1561.00C1441.67,1561.00 1455.33,1347.12 1469.00,1347.12C1482.67,1347.12 1496.33,1561.00 1510.00,1561.00C1523.67,1561.00 1537.33,1350.64 1551.00,1350.64C1564.67,1350.64 1578.33,1561.00 1592.00,1561.00C1605.67,1561.00 1619.33,1346.34 1633.00,1346.34C1646.67,1346.34 1660.33,1561.00 1674.00,1561.00C1687.67,1561.00 1701.33,1342.82 1715.00,1342.82C1728.67,1342.82 1742.33,1561.00 1756.00,1561.00C1769.67,1561.00 1783.33,1347.90 1797.00,1347.90C1810.67,1347.90 1824.33,1561.00 1838.00,1561.00C1851.67,1561.00 1865.33,1450.74 1879.00,1340.48L1879.00,1561L116.00,1561Z" fill="url(#g9)" stroke="none"/><path d="M116.00,1561.00C129.67,1453.08 143.33,1345.17 157.00,1345.17C170.67,1345.17 184.33,1561.00 198.00,1561.00C211.67,1561.00 225.33,1345.95 239.00,1345.95C252.67,1345.95 266.33,1561.00 280.00,1561.00C293.67,1561.00 307.33,1338.13 321.00,1338.13C334.67,1338.13 348.33,1561.00 362.00,1561.00C375.67,1561.00 389.33,1336.57 403.00,1336.57C416.67,1336.57 430.33,1561.00 444.00,1561.00C457.67,1561.00 471.33,1345.95 485.00,1345.95C498.67,1345.95 512.33,1561.00 526.00,1561.00C539.67,1561.00 553.33,1342.43 567.00,1342.43C580.67,1342.43 594.33,1561.00 608.00,1561.00C621.67,1561.00 635.33,1347.51 649.00,1347.51C662.67,1347.51 676.33,1561.00 690.00,1561.00C703.67,1561.00 717.33,1345.17 731.00,1345.17C744.67,1345.17 758.33,1561.00 772.00,1561.00C785.67,1561.00 799.33,1347.51 813.00,1347.51C826.67,1347.51 840.33,1561.00 854.00,1561.00C867.67,1561.00 881.33,1341.65 895.00,1341.65C908.67,1341.65 922.33,1561.00 936.00,1561.00C949.67,1561.00 963.33,1348.30 977.00,1348.30C990.67,1348.30 1004.33,1561.00 1018.00,1561.00C1031.67,1561.00 1045.33,1345.17 1059.00,1345.17C1072.67,1345.17 1086.33,1561.00 1100.00,1561.00C1113.67,1561.00 1127.33,1343.60 1141.00,1343.60C1154.67,1343.60 1168.33,1561.00 1182.00,1561.00C1195.67,1561.00 1209.33,1337.35 1223.00,1337.35C1236.67,1337.35 1250.33,1561.00 1264.00,1561.00C1277.67,1561.00 1291.33,1349.08 1305.00,1349.08C1318.67,1349.08 1332.33,1561.00 1346.00,1561.00C1359.67,1561.00 1373.33,1341.65 1387.00,1341.65C1400.67,1341.65 1414.33,1561.00 1428.00,1561.00C1441.67,1561.00 1455.33,1347.12 1469.00,1347.12C1482.67,1347.12 1496.33,1561.00 1510.00,1561.00C1523.67,1561.00 1537.33,1350.64 1551.00,1350.64C1564.67,1350.64 1578.33,1561.00 1592.00,1561.00C1605.67,1561.00 1619.33,1346.34 1633.00,1346.34C1646.67,1346.34 1660.33,1561.00 1674.00,1561.00C1687.67,1561.00 1701.33,1342.82 1715.00,1342.82C1728.67,1342.82 1742.33,1561.00 1756.00,1561.00C1769.67,1561.00 1783.33,1347.90 1797.00,1347.90C1810.67,1347.90 1824.33,1561.00 1838.00,1561.00C1851.67,1561.00 1865.33,1450.74 1879.00,1340.48" fill="none" stroke="#848d96" stroke-width="1.15"/>
<defs><linearGradient id="g10" x1="0" y1="0" x2="0" y2="1"><stop offset="0" stop-color="#39b5ab" stop-opacity="0.17"/><stop offset="0.1" stop-color="#39b5ab" stop-opacity="0"/></linearGradient></defs><path d="M116.00,1561.00C129.67,1398.15 143.33,1235.30 157.00,1235.30C170.67,1235.30 184.33,1561.00 198.00,1561.00C211.67,1561.00 225.33,1233.34 239.00,1233.34C252.67,1233.34 266.33,1561.00 280.00,1561.00C293.67,1561.00 307.33,1234.12 321.00,1234.12C334.67,1234.12 348.33,1561.00 362.00,1561.00C375.67,1561.00 389.33,1231.00 403.00,1231.00C416.67,1231.00 430.33,1561.00 444.00,1561.00C457.67,1561.00 471.33,1240.38 485.00,1240.38C498.67,1240.38 512.33,1561.00 526.00,1561.00C539.67,1561.00 553.33,1240.77 567.00,1240.77C580.67,1240.77 594.33,1561.00 608.00,1561.00C621.67,1561.00 635.33,1237.64 649.00,1237.64C662.67,1237.64 676.33,1561.00 690.00,1561.00C703.67,1561.00 717.33,1242.34 731.00,1242.34C744.67,1242.34 758.33,1561.00 772.00,1561.00C785.67,1561.00 799.33,1241.55 813.00,1241.55C826.67,1241.55 840.33,1561.00 854.00,1561.00C867.67,1561.00 881.33,1240.77 895.00,1240.77C908.67,1240.77 922.33,1561.00 936.00,1561.00C949.67,1561.00 963.33,1240.77 977.00,1240.77C990.67,1240.77 1004.33,1561.00 1018.00,1561.00C1031.67,1561.00 1045.33,1233.34 1059.00,1233.34C1072.67,1233.34 1086.33,1561.00 1100.00,1561.00C1113.67,1561.00 1127.33,1234.91 1141.00,1234.91C1154.67,1234.91 1168.33,1561.00 1182.00,1561.00C1195.67,1561.00 1209.33,1229.04 1223.00,1229.04C1236.67,1229.04 1250.33,1561.00 1264.00,1561.00C1277.67,1561.00 1291.33,1239.21 1305.00,1239.21C1318.67,1239.21 1332.33,1561.00 1346.00,1561.00C1359.67,1561.00 1373.33,1240.77 1387.00,1240.77C1400.67,1240.77 1414.33,1561.00 1428.00,1561.00C1441.67,1561.00 1455.33,1232.95 1469.00,1232.95C1482.67,1232.95 1496.33,1561.00 1510.00,1561.00C1523.67,1561.00 1537.33,1240.38 1551.00,1240.38C1564.67,1240.38 1578.33,1561.00 1592.00,1561.00C1605.67,1561.00 1619.33,1243.51 1633.00,1243.51C1646.67,1243.51 1660.33,1561.00 1674.00,1561.00C1687.67,1561.00 1701.33,1240.77 1715.00,1240.77C1728.67,1240.77 1742.33,1561.00 1756.00,1561.00C1769.67,1561.00 1783.33,1240.77 1797.00,1240.77C1810.67,1240.77 1824.33,1561.00 1838.00,1561.00C1851.67,1561.00 1865.33,1400.49 1879.00,1239.99L1879.00,1561L116.00,1561Z" fill="url(#g10)" stroke="none"/><path d="M116.00,1561.00C129.67,1398.15 143.33,1235.30 157.00,1235.30C170.67,1235.30 184.33,1561.00 198.00,1561.00C211.67,1561.00 225.33,1233.34 239.00,1233.34C252.67,1233.34 266.33,1561.00 280.00,1561.00C293.67,1561.00 307.33,1234.12 321.00,1234.12C334.67,1234.12 348.33,1561.00 362.00,1561.00C375.67,1561.00 389.33,1231.00 403.00,1231.00C416.67,1231.00 430.33,1561.00 444.00,1561.00C457.67,1561.00 471.33,1240.38 485.00,1240.38C498.67,1240.38 512.33,1561.00 526.00,1561.00C539.67,1561.00 553.33,1240.77 567.00,1240.77C580.67,1240.77 594.33,1561.00 608.00,1561.00C621.67,1561.00 635.33,1237.64 649.00,1237.64C662.67,1237.64 676.33,1561.00 690.00,1561.00C703.67,1561.00 717.33,1242.34 731.00,1242.34C744.67,1242.34 758.33,1561.00 772.00,1561.00C785.67,1561.00 799.33,1241.55 813.00,1241.55C826.67,1241.55 840.33,1561.00 854.00,1561.00C867.67,1561.00 881.33,1240.77 895.00,1240.77C908.67,1240.77 922.33,1561.00 936.00,1561.00C949.67,1561.00 963.33,1240.77 977.00,1240.77C990.67,1240.77 1004.33,1561.00 1018.00,1561.00C1031.67,1561.00 1045.33,1233.34 1059.00,1233.34C1072.67,1233.34 1086.33,1561.00 1100.00,1561.00C1113.67,1561.00 1127.33,1234.91 1141.00,1234.91C1154.67,1234.91 1168.33,1561.00 1182.00,1561.00C1195.67,1561.00 1209.33,1229.04 1223.00,1229.04C1236.67,1229.04 1250.33,1561.00 1264.00,1561.00C1277.67,1561.00 1291.33,1239.21 1305.00,1239.21C1318.67,1239.21 1332.33,1561.00 1346.00,1561.00C1359.67,1561.00 1373.33,1240.77 1387.00,1240.77C1400.67,1240.77 1414.33,1561.00 1428.00,1561.00C1441.67,1561.00 1455.33,1232.95 1469.00,1232.95C1482.67,1232.95 1496.33,1561.00 1510.00,1561.00C1523.67,1561.00 1537.33,1240.38 1551.00,1240.38C1564.67,1240.38 1578.33,1561.00 1592.00,1561.00C1605.67,1561.00 1619.33,1243.51 1633.00,1243.51C1646.67,1243.51 1660.33,1561.00 1674.00,1561.00C1687.67,1561.00 1701.33,1240.77 1715.00,1240.77C1728.67,1240.77 1742.33,1561.00 1756.00,1561.00C1769.67,1561.00 1783.33,1240.77 1797.00,1240.77C1810.67,1240.77 1824.33,1561.00 1838.00,1561.00C1851.67,1561.00 1865.33,1400.49 1879.00,1239.99" fill="none" stroke="#39b5ab" stroke-width="1.15"/>
<path d="M116.00,1561.00C129.67,1561.00 143.33,1561.00 157.00,1561.00C170.67,1561.00 184.33,1561.00 198.00,1561.00C211.67,1561.00 225.33,1561.00 239.00,1561.00C252.67,1561.00 266.33,1561.00 280.00,1561.00C293.67,1561.00 307.33,1561.00 321.00,1561.00C334.67,1561.00 348.33,1561.00 362.00,1561.00C375.67,1561.00 389.33,1561.00 403.00,1561.00C416.67,1561.00 430.33,1561.00 444.00,1561.00C457.67,1561.00 471.33,1561.00 485.00,1561.00C498.67,1561.00 512.33,1561.00 526.00,1561.00C539.67,1561.00 553.33,1561.00 567.00,1561.00C580.67,1561.00 594.33,1561.00 608.00,1561.00C621.67,1561.00 635.33,1561.00 649.00,1561.00C662.67,1561.00 676.33,1561.00 690.00,1561.00C703.67,1561.00 717.33,1561.00 731.00,1561.00C744.67,1561.00 758.33,1561.00 772.00,1561.00C785.67,1561.00 799.33,1561.00 813.00,1561.00C826.67,1561.00 840.33,1561.00 854.00,1561.00C867.67,1561.00 881.33,1561.00 895.00,1561.00C908.67,1561.00 922.33,1561.00 936.00,1561.00C949.67,1561.00 963.33,1561.00 977.00,1561.00C990.67,1561.00 1004.33,1561.00 1018.00,1561.00C1031.67,1561.00 1045.33,1561.00 1059.00,1561.00C1072.67,1561.00 1086.33,1561.00 1100.00,1561.00C1113.67,1561.00 1127.33,1561.00 1141.00,1561.00C1154.67,1561.00 1168.33,1561.00 1182.00,1561.00C1195.67,1561.00 1209.33,1561.00 1223.00,1561.00C1236.67,1561.00 1250.33,1561.00 1264.00,1561.00C1277.67,1561.00 1291.33,1561.00 1305.00,1561.00C1318.67,1561.00 1332.33,1561.00 1346.00,1561.00C1359.67,1561.00 1373.33,1561.00 1387.00,1561.00C1400.67,1561.00 1414.33,1561.00 1428.00,1561.00C1441.67,1561.00 1455.33,1561.00 1469.00,1561.00C1482.67,1561.00 1496.33,1561.00 1510.00,1561.00C1523.67,1561.00 1537.33,1561.00 1551.00,1561.00C1564.67,1561.00 1578.33,1561.00 1592.00,1561.00C1605.67,1561.00 1619.33,1561.00 1633.00,1561.00C1646.67,1561.00 1660.33,1561.00 1674.00,1561.00C1687.67,1561.00 1701.33,1561.00 1715.00,1561.00C1728.67,1561.00 1742.33,1561.00 1756.00,1561.00C1769.67,1561.00 1783.33,1561.00 1797.00,1561.00C1810.67,1561.00 1824.33,1561.00 1838.00,1561.00C1851.67,1561.00 1865.33,1561.00 1879.00,1561.00" fill="none" stroke="#4ab4b8" stroke-width="2.0"/>
<path d="M76.5,1598.7h11.6" stroke="#30c9ef" stroke-opacity="0.7" stroke-width="1.6"/><text x="98.3" y="1601.4" style="fill:#30c9ef;stroke:#30c9ef">clickpipes-aws-p..-us-east-2.l2c4n</text><path d="M331.1,1598.7h11.6" stroke="#fb7e14" stroke-opacity="0.7" stroke-width="1.6"/><text x="352.90000000000003" y="1601.4" style="fill:#fb7e14;stroke:#fb7e14">clickpipes-aws-p..outheast-2.l2c4n</text><path d="M585.7,1598.7h11.6" stroke="#346dfb" stroke-opacity="0.7" stroke-width="1.6"/><text x="607.5" y="1601.4" style="fill:#346dfb;stroke:#346dfb">clickpipes-aws-p..-us-east-1.l2c4n</text><path d="M840.3000000000001,1598.7h11.6" stroke="#cdad7a" stroke-opacity="0.7" stroke-width="1.6"/><text x="862.1" y="1601.4" style="fill:#cdad7a;stroke:#cdad7a">clickpipes-aws-p..outheast-2.l2c4n</text><text x="1093.9" y="1601.4" style="fill:#909296;stroke:#909296" text-decoration="underline">+12 more</text>
</svg>
</div>
<div class="rz" style="left:1926px;top:1612.4px"></div>
<div class="panel" style="left:1943px;top:1127px;width:1870px;height:494px">
<div class="t " style="left:18.00px;top:13.63px;font-size:13px;color:#d5d6d9;">Task queue poll outcomes/sec</div>
<svg class="ic" style="left:1816.60px;top:42.70px" width="16.2" height="16.2" viewBox="0 0 24 24" fill="none" stroke="#c4c5c9" stroke-width="2.0" stroke-linecap="round" stroke-linejoin="round"><path d="M4 19l16 0"/><path d="M4 15l4 -6l4 2l4 -5l4 4"/></svg>
<svg class="ic" style="left:1836.60px;top:42.70px" width="16.2" height="16.2" viewBox="0 0 24 24" fill="none" stroke="#25e2a1" stroke-width="2.0" stroke-linecap="round" stroke-linejoin="round"><path d="M3 13a1 1 0 0 1 1 -1h4a1 1 0 0 1 1 1v6a1 1 0 0 1 -1 1h-4a1 1 0 0 1 -1 -1z"/><path d="M15 9a1 1 0 0 1 1 -1h4a1 1 0 0 1 1 1v10a1 1 0 0 1 -1 1h-4a1 1 0 0 1 -1 -1z"/><path d="M9 5a1 1 0 0 1 1 -1h4a1 1 0 0 1 1 1v14a1 1 0 0 1 -1 1h-4a1 1 0 0 1 -1 -1z"/><path d="M4 20h14"/></svg>
<svg class="ch" width="1870" height="494" viewBox="1943 1127 1870 494">
<g stroke="#444547" stroke-width="1.9" fill="none"><path d="M1996,1169.05V1561"/><path d="M1990,1561H3800"/><path d="M1990,1463.25H1996"/><path d="M1990,1365.5H1996"/><path d="M1990,1267.75H1996"/><path d="M1990,1170.0H1996"/><path d="M1996,1561V1567"/><path d="M2201.0,1561V1567"/><path d="M2406,1561V1567"/><path d="M2611.0,1561V1567"/><path d="M2816,1561V1567"/><path d="M3021.0,1561V1567"/><path d="M3226,1561V1567"/><path d="M3431.0,1561V1567"/><path d="M3759.0,1561V1567"/></g><text x="1987.7" y="1564.9" text-anchor="end">0</text><text x="1987.7" y="1467.2" text-anchor="end">0.05</text><text x="1987.7" y="1369.4" text-anchor="end">0.1</text><text x="1987.7" y="1271.7" text-anchor="end">0.15</text><text x="1987.7" y="1176.4" text-anchor="end">0.2</text><text x="2007.0" y="1577.3" text-anchor="middle">Dec 16 5:29:30 PM</text><text x="2201.0" y="1577.3" text-anchor="middle">5:32:00 PM</text><text x="2406.0" y="1577.3" text-anchor="middle">5:34:30 PM</text><text x="2611.0" y="1577.3" text-anchor="middle">5:37:00 PM</text><text x="2816.0" y="1577.3" text-anchor="middle">5:39:30 PM</text><text x="3021.0" y="1577.3" text-anchor="middle">5:42:00 PM</text><text x="3226.0" y="1577.3" text-anchor="middle">5:44:30 PM</text><text x="3431.0" y="1577.3" text-anchor="middle">5:47:00 PM</text><text x="3759.0" y="1577.3" text-anchor="middle">5:51:00 PM</text>
<rect x="2021.0" y="1528.14" width="32" height="32.86" fill="#20c997"/><rect x="2021.0" y="1464.14" width="32" height="64.00" fill="#8250dc"/><rect x="2021.0" y="1335.00" width="32" height="129.14" fill="#cdad7a"/><rect x="2021.0" y="1170.00" width="32" height="165.00" fill="#346dfb"/><rect x="2103.0" y="1495.00" width="32" height="66.00" fill="#fb7e14"/><rect x="2103.0" y="1431.00" width="32" height="64.00" fill="#30c9ef"/><rect x="2103.0" y="1301.10" width="32" height="129.90" fill="#848d96"/><rect x="2103.0" y="1170.00" width="32" height="131.10" fill="#fd9382"/><rect x="2185.0" y="1464.14" width="32" height="96.86" fill="#39b5ab"/><rect x="2185.0" y="1333.10" width="32" height="131.05" fill="#faa700"/><rect x="2185.0" y="1203.95" width="32" height="129.14" fill="#20c997"/><rect x="2185.0" y="1170.00" width="32" height="33.95" fill="#8250dc"/><rect x="2267.0" y="1528.14" width="32" height="32.86" fill="#cdad7a"/><rect x="2267.0" y="1495.00" width="32" height="33.14" fill="#346dfb"/><rect x="2267.0" y="1366.24" width="32" height="128.76" fill="#fb7e14"/><rect x="2267.0" y="1170.00" width="32" height="196.24" fill="#30c9ef"/><rect x="2349.0" y="1528.14" width="32" height="32.86" fill="#848d96"/><rect x="2349.0" y="1366.24" width="32" height="161.90" fill="#fd9382"/><rect x="2349.0" y="1237.10" width="32" height="129.14" fill="#39b5ab"/><rect x="2349.0" y="1170.00" width="32" height="67.10" fill="#faa700"/><rect x="2431.0" y="1528.14" width="32" height="32.86" fill="#20c997"/><rect x="2431.0" y="1495.00" width="32" height="33.14" fill="#8250dc"/><rect x="2431.0" y="1333.10" width="32" height="161.90" fill="#cdad7a"/><rect x="2431.0" y="1170.00" width="32" height="163.10" fill="#346dfb"/><rect x="2513.0" y="1496.90" width="32" height="64.10" fill="#fb7e14"/><rect x="2513.0" y="1335.00" width="32" height="161.90" fill="#30c9ef"/><rect x="2513.0" y="1171.95" width="32" height="163.05" fill="#848d96"/><rect x="2513.0" y="1170.00" width="32" height="1.95" fill="#fd9382"/><rect x="2595.0" y="1528.14" width="32" height="32.86" fill="#39b5ab"/><rect x="2595.0" y="1366.24" width="32" height="161.90" fill="#faa700"/><rect x="2595.0" y="1301.10" width="32" height="65.14" fill="#20c997"/><rect x="2595.0" y="1170.00" width="32" height="131.10" fill="#8250dc"/><rect x="2677.0" y="1464.14" width="32" height="96.86" fill="#cdad7a"/><rect x="2677.0" y="1301.10" width="32" height="163.05" fill="#346dfb"/><rect x="2677.0" y="1237.10" width="32" height="64.00" fill="#fb7e14"/><rect x="2677.0" y="1170.00" width="32" height="67.10" fill="#30c9ef"/><rect x="2759.0" y="1496.90" width="32" height="64.10" fill="#848d96"/><rect x="2759.0" y="1335.00" width="32" height="161.90" fill="#fd9382"/><rect x="2759.0" y="1301.10" width="32" height="33.90" fill="#39b5ab"/><rect x="2759.0" y="1170.00" width="32" height="131.10" fill="#faa700"/><rect x="2841.0" y="1528.14" width="32" height="32.86" fill="#20c997"/><rect x="2841.0" y="1366.24" width="32" height="161.90" fill="#8250dc"/><rect x="2841.0" y="1333.10" width="32" height="33.14" fill="#cdad7a"/><rect x="2841.0" y="1170.00" width="32" height="163.10" fill="#346dfb"/><rect x="2923.0" y="1496.90" width="32" height="64.10" fill="#fb7e14"/><rect x="2923.0" y="1335.00" width="32" height="161.90" fill="#30c9ef"/><rect x="2923.0" y="1205.86" width="32" height="129.14" fill="#848d96"/><rect x="2923.0" y="1170.00" width="32" height="35.86" fill="#fd9382"/><rect x="3005.0" y="1528.14" width="32" height="32.86" fill="#39b5ab"/><rect x="3005.0" y="1495.00" width="32" height="33.14" fill="#faa700"/><rect x="3005.0" y="1333.10" width="32" height="161.90" fill="#20c997"/><rect x="3005.0" y="1170.00" width="32" height="163.10" fill="#8250dc"/><rect x="3087.0" y="1496.90" width="32" height="64.10" fill="#cdad7a"/><rect x="3087.0" y="1335.00" width="32" height="161.90" fill="#346dfb"/><rect x="3087.0" y="1269.86" width="32" height="65.14" fill="#fb7e14"/><rect x="3087.0" y="1170.00" width="32" height="99.86" fill="#30c9ef"/><rect x="3169.0" y="1495.00" width="32" height="66.00" fill="#848d96"/><rect x="3169.0" y="1431.00" width="32" height="64.00" fill="#fd9382"/><rect x="3169.0" y="1170.00" width="32" height="261.00" fill="#faa700"/>
<path d="M1956.5,1598.7h11.6" stroke="#faa700" stroke-opacity="0.7" stroke-width="1.6"/><text x="1978.3" y="1601.4" style="fill:#faa700;stroke:#faa700">no_poller_tasks ..-flow-task-queue</text><path d="M2211.1,1598.7h11.6" stroke="#39b5ab" stroke-opacity="0.7" stroke-width="1.6"/><text x="2232.9" y="1601.4" style="fill:#39b5ab;stroke:#39b5ab">poll_timeout · c..-flow-task-queue</text><path d="M2465.7,1598.7h11.6" stroke="#fd9382" stroke-opacity="0.7" stroke-width="1.6"/><text x="2487.5" y="1601.4" style="fill:#fd9382;stroke:#fd9382">poll_success_syn..-flow-task-queue</text><path d="M2720.2999999999997,1598.7h11.6" stroke="#848d96" stroke-opacity="0.7" stroke-width="1.6"/><text x="2742.1" y="1601.4" style="fill:#848d96;stroke:#848d96">poll_success · c..-flow-task-queue</text><text x="2973.9" y="1601.4" style="fill:#909296;stroke:#909296" text-decoration="underline">+56 more</text>
</svg>
</div>
<div class="rz" style="left:3806px;top:1612.4px"></div>
<div class="panel" style="left:63px;top:1631px;width:1870px;height:320px">
<div class="t " style="left:18.00px;top:13.63px;font-size:13px;color:#d5d6d9;">Task backlog</div>
<svg class="ic" style="left:1816.60px;top:42.70px" width="16.2" height="16.2" viewBox="0 0 24 24" fill="none" stroke="#25e2a1" stroke-width="2.0" stroke-linecap="round" stroke-linejoin="round"><path d="M4 19l16 0"/><path d="M4 15l4 -6l4 2l4 -5l4 4"/></svg>
<svg class="ic" style="left:1836.60px;top:42.70px" width="16.2" height="16.2" viewBox="0 0 24 24" fill="none" stroke="#c4c5c9" stroke-width="2.0" stroke-linecap="round" stroke-linejoin="round"><path d="M3 13a1 1 0 0 1 1 -1h4a1 1 0 0 1 1 1v6a1 1 0 0 1 -1 1h-4a1 1 0 0 1 -1 -1z"/><path d="M15 9a1 1 0 0 1 1 -1h4a1 1 0 0 1 1 1v10a1 1 0 0 1 -1 1h-4a1 1 0 0 1 -1 -1z"/><path d="M9 5a1 1 0 0 1 1 -1h4a1 1 0 0 1 1 1v14a1 1 0 0 1 -1 1h-4a1 1 0 0 1 -1 -1z"/><path d="M4 20h14"/></svg>
<svg class="ch" width="1870" height="320" viewBox="63 1631 1870 320">
<g stroke="#444547" stroke-width="1.9" fill="none"><path d="M116,1672.6499999999999V2064.5"/><path d="M110,2064.5H1920"/><path d="M110,1966.775H116"/><path d="M110,1869.05H116"/><path d="M110,1771.3249999999998H116"/><path d="M110,1673.6H116"/></g><text x="107.7" y="2068.4" text-anchor="end">0</text><text x="107.7" y="1970.7" text-anchor="end">1</text><text x="107.7" y="1873.0" text-anchor="end">2</text><text x="107.7" y="1775.2" text-anchor="end">3</text><text x="107.7" y="1680.0" text-anchor="end">4</text>
</svg>
</div>
<div class="panel" style="left:1943px;top:1631px;width:1870px;height:320px">
<div class="t " style="left:18.00px;top:13.63px;font-size:13px;color:#d5d6d9;">P95 latency</div>
<svg class="ic" style="left:1816.60px;top:42.70px" width="16.2" height="16.2" viewBox="0 0 24 24" fill="none" stroke="#25e2a1" stroke-width="2.0" stroke-linecap="round" stroke-linejoin="round"><path d="M4 19l16 0"/><path d="M4 15l4 -6l4 2l4 -5l4 4"/></svg>
<svg class="ic" style="left:1836.60px;top:42.70px" width="16.2" height="16.2" viewBox="0 0 24 24" fill="none" stroke="#c4c5c9" stroke-width="2.0" stroke-linecap="round" stroke-linejoin="round"><path d="M3 13a1 1 0 0 1 1 -1h4a1 1 0 0 1 1 1v6a1 1 0 0 1 -1 1h-4a1 1 0 0 1 -1 -1z"/><path d="M15 9a1 1 0 0 1 1 -1h4a1 1 0 0 1 1 1v10a1 1 0 0 1 -1 1h-4a1 1 0 0 1 -1 -1z"/><path d="M9 5a1 1 0 0 1 1 -1h4a1 1 0 0 1 1 1v14a1 1 0 0 1 -1 1h-4a1 1 0 0 1 -1 -1z"/><path d="M4 20h14"/></svg>
<svg class="ch" width="1870" height="320" viewBox="1943 1631 1870 320">
<g stroke="#444547" stroke-width="1.9" fill="none"><path d="M1996,1672.6499999999999V2064.5"/><path d="M1990,2064.5H3800"/><path d="M1990,1966.775H1996"/><path d="M1990,1869.05H1996"/><path d="M1990,1771.3249999999998H1996"/><path d="M1990,1673.6H1996"/></g><text x="1987.7" y="2068.4" text-anchor="end">0</text><text x="1987.7" y="1970.7" text-anchor="end">0.01</text><text x="1987.7" y="1873.0" text-anchor="end">0.019</text><text x="1987.7" y="1775.2" text-anchor="end">0.029</text><text x="1987.7" y="1680.0" text-anchor="end">0.038</text>
<defs><linearGradient id="g11" x1="0" y1="0" x2="0" y2="1"><stop offset="0" stop-color="#20c997" stop-opacity="0.17"/><stop offset="0.1" stop-color="#20c997" stop-opacity="0"/></linearGradient></defs><path d="M1996.00,2064.50C2009.67,2043.93 2023.33,2023.35 2037.00,2023.35C2050.67,2023.35 2064.33,2064.50 2078.00,2064.50C2091.67,2064.50 2105.33,1930.77 2119.00,1930.77C2132.67,1930.77 2146.33,2064.50 2160.00,2064.50C2173.67,2064.50 2187.33,2023.35 2201.00,2023.35C2214.67,2023.35 2228.33,2064.50 2242.00,2064.50C2255.67,2064.50 2269.33,2023.35 2283.00,2023.35C2296.67,2023.35 2310.33,2064.50 2324.00,2064.50C2337.67,2064.50 2351.33,2023.35 2365.00,2023.35C2378.67,2023.35 2392.33,2064.50 2406.00,2064.50C2419.67,2064.50 2433.33,2023.35 2447.00,2023.35C2460.67,2023.35 2474.33,2064.50 2488.00,2064.50C2501.67,2064.50 2515.33,2023.35 2529.00,2023.35C2542.67,2023.35 2556.33,2064.50 2570.00,2064.50C2583.67,2064.50 2597.33,2023.35 2611.00,2023.35C2624.67,2023.35 2638.33,2064.50 2652.00,2064.50C2665.67,2064.50 2679.33,2023.35 2693.00,2023.35C2706.67,2023.35 2720.33,2064.50 2734.00,2064.50C2747.67,2064.50 2761.33,2023.35 2775.00,2023.35C2788.67,2023.35 2802.33,2064.50 2816.00,2064.50C2829.67,2064.50 2843.33,2023.35 2857.00,2023.35C2870.67,2023.35 2884.33,2064.50 2898.00,2064.50C2911.67,2064.50 2925.33,2023.35 2939.00,2023.35C2952.67,2023.35 2966.33,2064.50 2980.00,2064.50C2993.67,2064.50 3007.33,2023.35 3021.00,2023.35C3034.67,2023.35 3048.33,2064.50 3062.00,2064.50C3075.67,2064.50 3089.33,2023.35 3103.00,2023.35C3116.67,2023.35 3130.33,2064.50 3144.00,2064.50C3157.67,2064.50 3171.33,2023.35 3185.00,2023.35C3198.67,2023.35 3212.33,2064.50 3226.00,2064.50C3239.67,2064.50 3253.33,2023.35 3267.00,2023.35C3280.67,2023.35 3294.33,2064.50 3308.00,2064.50C3321.67,2064.50 3335.33,1874.19 3349.00,1874.19C3362.67,1874.19 3376.33,2064.50 3390.00,2064.50C3403.67,2064.50 3417.33,2023.35 3431.00,2023.35C3444.67,2023.35 3458.33,2064.50 3472.00,2064.50C3485.67,2064.50 3499.33,1694.17 3513.00,1694.17C3526.67,1694.17 3540.33,2064.50 3554.00,2064.50C3567.67,2064.50 3581.33,2023.35 3595.00,2023.35C3608.67,2023.35 3622.33,2064.50 3636.00,2064.50C3649.67,2064.50 3663.33,2023.35 3677.00,2023.35C3690.67,2023.35 3704.33,2064.50 3718.00,2064.50C3731.67,2064.50 3745.33,2043.93 3759.00,2023.35L3759.00,2064.5L1996.00,2064.5Z" fill="url(#g11)" stroke="none"/><path d="M1996.00,2064.50C2009.67,2043.93 2023.33,2023.35 2037.00,2023.35C2050.67,2023.35 2064.33,2064.50 2078.00,2064.50C2091.67,2064.50 2105.33,1930.77 2119.00,1930.77C2132.67,1930.77 2146.33,2064.50 2160.00,2064.50C2173.67,2064.50 2187.33,2023.35 2201.00,2023.35C2214.67,2023.35 2228.33,2064.50 2242.00,2064.50C2255.67,2064.50 2269.33,2023.35 2283.00,2023.35C2296.67,2023.35 2310.33,2064.50 2324.00,2064.50C2337.67,2064.50 2351.33,2023.35 2365.00,2023.35C2378.67,2023.35 2392.33,2064.50 2406.00,2064.50C2419.67,2064.50 2433.33,2023.35 2447.00,2023.35C2460.67,2023.35 2474.33,2064.50 2488.00,2064.50C2501.67,2064.50 2515.33,2023.35 2529.00,2023.35C2542.67,2023.35 2556.33,2064.50 2570.00,2064.50C2583.67,2064.50 2597.33,2023.35 2611.00,2023.35C2624.67,2023.35 2638.33,2064.50 2652.00,2064.50C2665.67,2064.50 2679.33,2023.35 2693.00,2023.35C2706.67,2023.35 2720.33,2064.50 2734.00,2064.50C2747.67,2064.50 2761.33,2023.35 2775.00,2023.35C2788.67,2023.35 2802.33,2064.50 2816.00,2064.50C2829.67,2064.50 2843.33,2023.35 2857.00,2023.35C2870.67,2023.35 2884.33,2064.50 2898.00,2064.50C2911.67,2064.50 2925.33,2023.35 2939.00,2023.35C2952.67,2023.35 2966.33,2064.50 2980.00,2064.50C2993.67,2064.50 3007.33,2023.35 3021.00,2023.35C3034.67,2023.35 3048.33,2064.50 3062.00,2064.50C3075.67,2064.50 3089.33,2023.35 3103.00,2023.35C3116.67,2023.35 3130.33,2064.50 3144.00,2064.50C3157.67,2064.50 3171.33,2023.35 3185.00,2023.35C3198.67,2023.35 3212.33,2064.50 3226.00,2064.50C3239.67,2064.50 3253.33,2023.35 3267.00,2023.35C3280.67,2023.35 3294.33,2064.50 3308.00,2064.50C3321.67,2064.50 3335.33,1874.19 3349.00,1874.19C3362.67,1874.19 3376.33,2064.50 3390.00,2064.50C3403.67,2064.50 3417.33,2023.35 3431.00,2023.35C3444.67,2023.35 3458.33,2064.50 3472.00,2064.50C3485.67,2064.50 3499.33,1694.17 3513.00,1694.17C3526.67,1694.17 3540.33,2064.50 3554.00,2064.50C3567.67,2064.50 3581.33,2023.35 3595.00,2023.35C3608.67,2023.35 3622.33,2064.50 3636.00,2064.50C3649.67,2064.50 3663.33,2023.35 3677.00,2023.35C3690.67,2023.35 3704.33,2064.50 3718.00,2064.50C3731.67,2064.50 3745.33,2043.93 3759.00,2023.35" fill="none" stroke="#20c997" stroke-width="1.15"/>
</svg>
</div>
<div style="position:absolute;left:3825px;top:0;width:15px;height:1933px;background:#2c2c2d;border-left:1px solid #38383a;box-sizing:border-box"></div>
<div style="position:absolute;left:3829px;top:3px;width:8px;height:1043px;background:#7a7a7b;border-radius:4px"></div>
</div><div id="frame"></div></body></html>
